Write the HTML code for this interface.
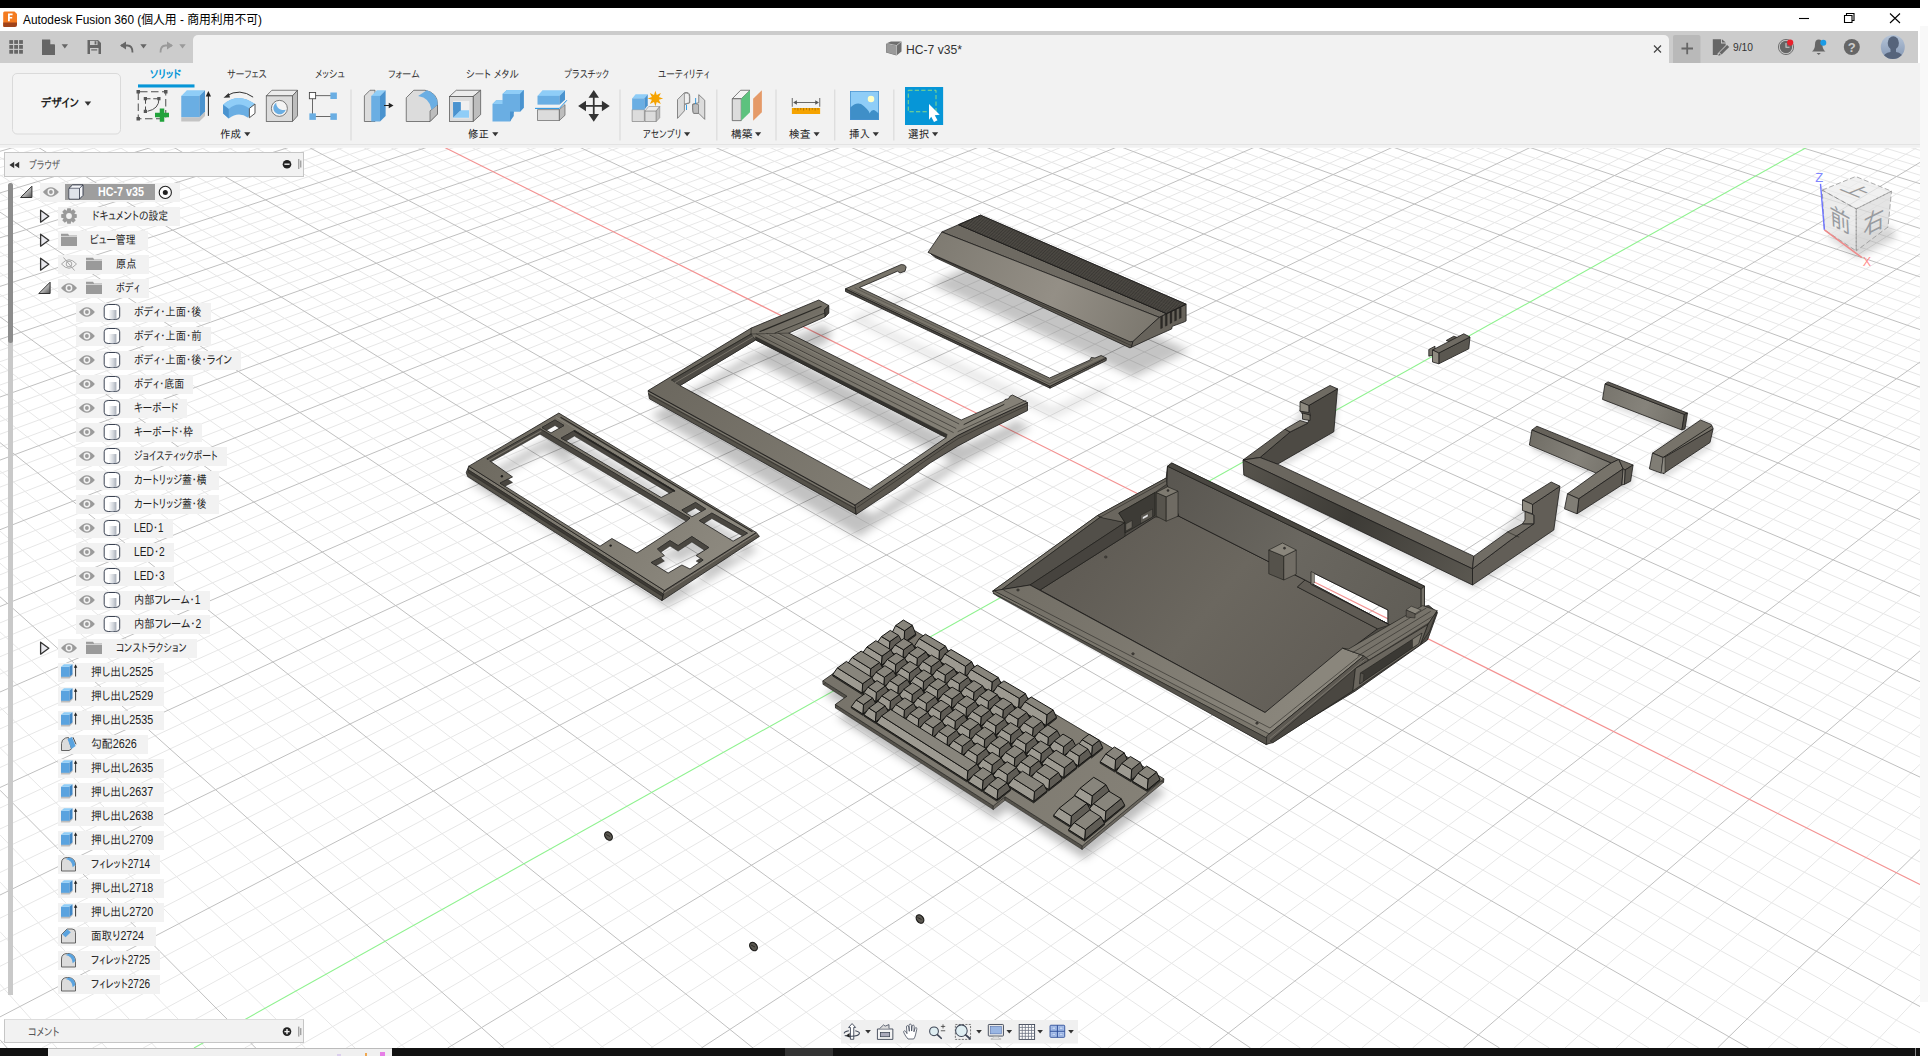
<!DOCTYPE html><html lang="ja"><head><meta charset="utf-8"><title>Autodesk Fusion 360</title><style>

html,body{margin:0;padding:0;}
body{width:1928px;height:1056px;overflow:hidden;background:#fff;position:relative;font-family:"Liberation Sans","IPAPGothic","IPAGothic","Noto Sans CJK JP",sans-serif;}
.abs{position:absolute;}
#topblack{left:0;top:0;width:1920px;height:8px;background:#000;}
#titlebar{left:0;top:8px;width:1920px;height:23px;background:#fff;}
#tabbar{left:0;top:31px;width:1918px;height:32px;background:#cccccc;}
#doctab{left:193px;top:35px;width:1476px;height:28px;background:#f2f2f2;border-radius:5px 5px 0 0;}
#toolbar{left:0;top:63px;width:1920px;height:81px;background:#f2f2f2;}
#tbline{left:0;top:144px;width:1920px;height:4px;background:linear-gradient(#e3e3e3 0,#e3e3e3 25%,#f1f1f1 25%,#f1f1f1 75%,#f9f9f9 100%);}
#botblack{left:0;top:1048px;width:1920px;height:8px;background:#111;}
#rstrip{left:1920px;top:26px;width:8px;height:976px;background:#f8f8f8;}
svg{position:absolute;left:0;top:0;}
text{font-family:"Liberation Sans","IPAPGothic","IPAGothic","Noto Sans CJK JP",sans-serif;}

.rb{position:absolute;height:19px;background:#f2f2f2;}

</style></head><body>
<svg width="1928" height="1056" viewBox="0 0 1928 1056">
<g fill="none" stroke-width="1">
<path stroke="#e7e7e7" d="M0.0 159.4 L42.5 147.0 M0.0 167.6 L70.0 147.0 M0.0 175.9 L97.6 147.0 M0.0 184.3 L125.1 147.0 M0.0 201.6 L180.1 147.0 M0.0 210.4 L207.6 147.0 M0.0 219.4 L235.2 147.0 M0.0 228.5 L262.7 147.0 M0.0 247.2 L317.7 147.0 M0.0 256.7 L345.3 147.0 M0.0 266.5 L372.8 147.0 M0.0 276.4 L400.3 147.0 M0.0 296.6 L455.4 147.0 M0.0 307.0 L483.0 147.0 M0.0 317.6 L510.5 147.0 M0.0 328.3 L538.1 147.0 M0.0 350.4 L593.2 147.0 M0.0 361.7 L620.7 147.0 M0.0 373.3 L648.3 147.0 M0.0 385.0 L675.8 147.0 M0.0 409.1 L731.0 147.0 M0.0 421.5 L758.5 147.0 M0.0 434.2 L786.1 147.0 M0.0 447.0 L813.6 147.0 M0.0 473.5 L868.8 147.0 M0.0 487.1 L896.4 147.0 M0.0 501.0 L923.9 147.0 M0.0 515.2 L951.5 147.0 M0.0 544.4 L1006.7 147.0 M0.0 559.5 L1034.3 147.0 M0.0 574.8 L1061.8 147.0 M0.0 590.5 L1089.4 147.0 M0.0 622.9 L1144.6 147.0 M0.0 639.6 L1172.2 147.0 M0.0 656.7 L1199.8 147.0 M0.0 674.1 L1227.4 147.0 M0.0 710.2 L1282.6 147.0 M0.0 728.9 L1310.2 147.0 M0.0 748.0 L1337.8 147.0 M0.0 767.5 L1365.4 147.0 M0.0 808.0 L1420.7 147.0 M0.0 829.0 L1448.3 147.0 M0.0 850.4 L1475.9 147.0 M0.0 872.5 L1503.5 147.0 M0.0 918.2 L1558.7 147.0 M0.0 941.9 L1586.4 147.0 M0.0 966.3 L1614.0 147.0 M0.0 991.3 L1641.6 147.0 M0.0 1043.3 L1696.9 147.0 M41.8 1048.0 L1724.5 147.0 M92.5 1048.0 L1752.2 147.0 M143.2 1048.0 L1779.8 147.0 M244.7 1048.0 L1835.1 147.0 M295.4 1048.0 L1862.7 147.0 M346.2 1048.0 L1890.4 147.0 M396.9 1048.0 L1918.0 147.0 M498.4 1048.0 L1920.0 179.6 M549.1 1048.0 L1920.0 197.3 M599.9 1048.0 L1920.0 215.5 M650.7 1048.0 L1920.0 234.4 M752.2 1048.0 L1920.0 274.0 M803.0 1048.0 L1920.0 294.9 M853.7 1048.0 L1920.0 316.4 M904.5 1048.0 L1920.0 338.8 M1006.1 1048.0 L1920.0 386.0 M1056.9 1048.0 L1920.0 411.0 M1107.7 1048.0 L1920.0 436.9 M1158.5 1048.0 L1920.0 463.8 M1260.1 1048.0 L1920.0 521.0 M1310.9 1048.0 L1920.0 551.4 M1361.7 1048.0 L1920.0 583.1 M1412.5 1048.0 L1920.0 616.2 M1514.1 1048.0 L1920.0 686.9 M1565.0 1048.0 L1920.0 724.7 M1615.8 1048.0 L1920.0 764.4 M1666.6 1048.0 L1920.0 806.0 M1768.3 1048.0 L1920.0 895.6 M1819.1 1048.0 L1920.0 944.0 M1870.0 1048.0 L1920.0 995.0 M0.0 984.2 L56.9 1048.0 M0.0 931.7 L106.6 1048.0 M0.0 882.0 L156.3 1048.0 M0.0 834.9 L206.0 1048.0 M0.0 747.7 L305.4 1048.0 M0.0 707.2 L355.1 1048.0 M0.0 668.7 L404.8 1048.0 M0.0 631.9 L454.6 1048.0 M0.0 563.2 L554.0 1048.0 M0.0 531.1 L603.8 1048.0 M0.0 500.4 L653.5 1048.0 M0.0 470.9 L703.2 1048.0 M0.0 415.4 L802.7 1048.0 M0.0 389.3 L852.5 1048.0 M0.0 364.2 L902.2 1048.0 M0.0 340.0 L952.0 1048.0 M0.0 294.3 L1051.5 1048.0 M0.0 272.7 L1101.3 1048.0 M0.0 251.8 L1151.1 1048.0 M0.0 231.6 L1200.9 1048.0 M0.0 193.2 L1300.4 1048.0 M0.0 175.0 L1350.2 1048.0 M0.0 157.3 L1400.0 1048.0 M10.8 147.0 L1449.8 1048.0 M64.9 147.0 L1549.4 1048.0 M91.9 147.0 L1599.2 1048.0 M119.0 147.0 L1649.0 1048.0 M146.0 147.0 L1698.8 1048.0 M200.2 147.0 L1798.5 1048.0 M227.2 147.0 L1848.3 1048.0 M254.3 147.0 L1898.1 1048.0 M281.3 147.0 L1920.0 1032.9 M335.5 147.0 L1920.0 980.8 M362.6 147.0 L1920.0 955.8 M389.6 147.0 L1920.0 931.5 M416.7 147.0 L1920.0 907.7 M470.9 147.0 L1920.0 862.0 M497.9 147.0 L1920.0 840.0 M525.0 147.0 L1920.0 818.5 M552.1 147.0 L1920.0 797.6 M606.3 147.0 L1920.0 757.1 M633.4 147.0 L1920.0 737.6 M660.5 147.0 L1920.0 718.6 M687.6 147.0 L1920.0 699.9 M741.7 147.0 L1920.0 663.9 M768.8 147.0 L1920.0 646.4 M796.0 147.0 L1920.0 629.4 M823.1 147.0 L1920.0 612.7 M877.3 147.0 L1920.0 580.4 M904.4 147.0 L1920.0 564.7 M931.5 147.0 L1920.0 549.4 M958.6 147.0 L1920.0 534.3 M1012.8 147.0 L1920.0 505.2 M1040.0 147.0 L1920.0 491.0 M1067.1 147.0 L1920.0 477.2 M1094.2 147.0 L1920.0 463.6 M1148.5 147.0 L1920.0 437.1 M1175.6 147.0 L1920.0 424.3 M1202.7 147.0 L1920.0 411.7 M1229.9 147.0 L1920.0 399.3 M1284.1 147.0 L1920.0 375.2 M1311.3 147.0 L1920.0 363.5 M1338.4 147.0 L1920.0 352.0 M1365.6 147.0 L1920.0 340.7 M1419.8 147.0 L1920.0 318.7 M1447.0 147.0 L1920.0 308.0 M1474.1 147.0 L1920.0 297.5 M1501.3 147.0 L1920.0 287.1 M1555.6 147.0 L1920.0 266.9 M1582.8 147.0 L1920.0 257.0 M1609.9 147.0 L1920.0 247.3 M1637.1 147.0 L1920.0 237.8 M1691.4 147.0 L1920.0 219.2 M1718.6 147.0 L1920.0 210.1 M1745.8 147.0 L1920.0 201.2 M1772.9 147.0 L1920.0 192.4 M1827.3 147.0 L1920.0 175.2 M1854.5 147.0 L1920.0 166.7 M1881.7 147.0 L1920.0 158.5 M1908.8 147.0 L1920.0 150.3"/>
<path stroke="#c0c0c0" d="M0.0 151.3 L15.0 147.0 M0.0 192.9 L152.6 147.0 M0.0 237.8 L290.2 147.0 M0.0 286.4 L427.9 147.0 M0.0 339.3 L565.6 147.0 M0.0 397.0 L703.4 147.0 M0.0 460.1 L841.2 147.0 M0.0 529.7 L979.1 147.0 M0.0 606.5 L1117.0 147.0 M0.0 692.0 L1255.0 147.0 M0.0 787.5 L1393.0 147.0 M0.0 895.0 L1531.1 147.0 M0.0 1016.9 L1669.3 147.0 M447.6 1048.0 L1920.0 162.4 M701.4 1048.0 L1920.0 253.9 M955.3 1048.0 L1920.0 362.0 M1209.3 1048.0 L1920.0 491.8 M1463.3 1048.0 L1920.0 650.8 M1717.5 1048.0 L1920.0 849.7 M0.0 1039.7 L7.2 1048.0 M0.0 790.2 L255.7 1048.0 M0.0 596.8 L504.3 1048.0 M0.0 442.6 L753.0 1048.0 M0.0 316.8 L1001.8 1048.0 M0.0 212.1 L1250.6 1048.0 M37.8 147.0 L1499.6 1048.0 M173.1 147.0 L1748.7 1048.0 M308.4 147.0 L1920.0 1006.5 M579.2 147.0 L1920.0 777.1 M714.6 147.0 L1920.0 681.7 M850.2 147.0 L1920.0 596.4 M985.7 147.0 L1920.0 519.6 M1121.3 147.0 L1920.0 450.2 M1257.0 147.0 L1920.0 387.2 M1392.7 147.0 L1920.0 329.6 M1528.5 147.0 L1920.0 276.9 M1664.3 147.0 L1920.0 228.4 M1800.1 147.0 L1920.0 183.7"/>
<path stroke="#8ff28f" stroke-width="1.1" d="M194.0 1048.0 L1807.4 147.0"/>
<path stroke="#f39292" stroke-width="1.15" d="M443.8 147.0 L1920.0 884.6"/>
</g>
<g id="models">
<g id="shadows">
<defs><filter id="b4" x="-20%" y="-20%" width="140%" height="140%"><feGaussianBlur stdDeviation="4"/></filter><filter id="b6" x="-20%" y="-20%" width="140%" height="140%"><feGaussianBlur stdDeviation="6"/></filter><filter id="b3" x="-20%" y="-20%" width="140%" height="140%"><feGaussianBlur stdDeviation="2.5"/></filter></defs>
<path d="M470.8 483.2 L560.8 430.1 L758.2 549.5 L666.4 607.6Z M496.0 479.0 L544.0 451.0 L690.0 538.0 L639.0 570.0 L614.0 556.0 L602.0 563.0 L505.0 502.0 L515.0 495.0Z M567.0 457.0 L578.0 451.5 L674.5 508.0 L664.0 514.5Z M703.0 539.0 L714.0 533.0 L744.0 551.0 L733.0 557.0Z M653.2 579.5 L666.4 572.6 L659.5 566.0 L672.0 557.6 L680.1 562.6 L693.9 553.5 L710.8 564.5 L698.2 572.6 L705.1 577.0 L692.0 586.0 L683.9 582.0 L670.1 590.1Z" fill="#000" fill-opacity="0.22" fill-rule="evenodd" filter="url(#b4)"/>
<path d="M651.1 415.6 L754.2 353.1 L821.8 325.0 L831.8 330.6 L828.0 341.9 L791.8 358.1 L964.2 445.0 L1006.8 426.2 L1015.5 420.0 L1030.5 427.5 L960.5 465.0 L859.0 537.0Z M679.0 408.0 L756.0 362.0 L952.0 461.0 L873.0 514.4Z" fill="#000" fill-opacity="0.24" fill-rule="evenodd" filter="url(#b4)"/>
<path d="M848.5 318.8 L904.2 294.5 L909.2 297.0 L903.0 303.0 L862.5 317.5 L1052.5 408.0 L1093.0 390.0 L1104.2 385.5 L1109.2 390.5 L1053.0 418.2Z " fill="#000" fill-opacity="0.1" fill-rule="evenodd" filter="url(#b4)"/>
<path d="M931.0 284.0 L1134.5 377.0 L1189.2 350.5 L985.7 258.0Z " fill="#000" fill-opacity="0.23" fill-rule="evenodd" filter="url(#b4)"/>
<path d="M824.9 693.9 L849.0 709.2 L837.4 717.5 L995.3 818.9 L1007.0 809.7 L1084.3 858.9 L1165.8 791.8 L905.2 636.9Z " fill="#000" fill-opacity="0.26" fill-rule="evenodd" filter="url(#b4)"/>
<path d="M1245.0 465.0 L1287.0 434.2 L1302.0 406.8 L1332.0 390.5 L1339.5 393.8 L1335.8 436.8 L1279.5 469.2 L1475.8 561.2 L1524.5 505.0 L1553.2 487.0 L1562.0 491.2 L1555.8 535.0 L1474.5 590.0 L1245.8 480.0Z " fill="#000" fill-opacity="0.12" fill-rule="evenodd" filter="url(#b3)"/>
<path d="M1533.9 435.0 L1538.9 431.2 L1620.8 464.4 L1635.1 470.0 L1632.6 486.2 L1623.9 490.0 L1579.0 518.8 L1566.5 513.8 L1598.2 478.1 L1531.4 450.0Z " fill="#000" fill-opacity="0.12" fill-rule="evenodd" filter="url(#b3)"/>
<path d="M1607.0 388.8 L1610.1 386.9 L1689.5 418.1 L1687.0 433.8 L1683.9 435.0 L1604.5 404.4Z " fill="#000" fill-opacity="0.12" fill-rule="evenodd" filter="url(#b3)"/>
<path d="M1654.5 458.1 L1702.6 425.0 L1713.2 429.4 L1712.0 447.5 L1665.1 478.8 L1651.4 473.8Z " fill="#000" fill-opacity="0.12" fill-rule="evenodd" filter="url(#b3)"/>
</g>
<g id="m_kbframe">
<path d="M468.8 466.2 L664.4 590.6 L661.9 600.6 L467.6 476.5 L466.3 472.5Z" fill="#55524a" stroke="#1d1c1a" stroke-width="0.8" stroke-linejoin="round" />
<path d="M468.8 466.2 L664.4 590.6 L663.5 594.1 L468.3 469.8Z" fill="#7d796f" stroke="#1d1c1a" stroke-width="0.5" stroke-linejoin="round" />
<path d="M468.3 469.8 L663.5 594.1 L662.9 596.8 L468.0 472.6Z" fill="#3d3a35" stroke="#1d1c1a" stroke-width="0.4" stroke-linejoin="round" />
<path d="M664.4 590.6 L756.2 532.5 L759.4 536.4 L661.9 600.6Z" fill="#5a564e" stroke="#1d1c1a" stroke-width="0.8" stroke-linejoin="round" />
<path d="M663.8 593.1 L757.2 533.7" fill="none" stroke="#8b877d" stroke-width="0.8" stroke-linecap="round" />
<defs><linearGradient id="gkf" gradientUnits="userSpaceOnUse" x1="480" y1="440" x2="700" y2="580"><stop offset="0" stop-color="#6d695f"/><stop offset="1" stop-color="#8c887e"/></linearGradient></defs>
<path d="M468.8 466.2 L558.8 413.1 L756.2 532.5 L664.4 590.6Z M486.9 458.8 L540.0 428.8 L690.0 518.1 L686.2 521.2 L636.9 553.1 L611.9 538.5 L600.0 546.2 L500.0 483.1 L512.5 476.9Z M561.2 438.1 L574.4 430.6 L674.4 490.6 L661.2 497.5Z M542.0 427.5 L555.0 420.0 L564.0 425.5 L551.0 433.0Z M681.9 510.0 L695.6 502.5 L705.6 509.0 L691.9 516.9Z M699.4 520.6 L711.9 513.1 L747.5 533.1 L733.1 541.2Z M651.2 562.5 L664.4 555.6 L657.5 549.0 L670.0 540.6 L678.1 545.6 L691.9 536.5 L708.8 547.5 L696.2 555.6 L703.1 560.0 L690.0 569.0 L681.9 565.0 L668.1 573.1Z" fill="url(#gkf)" fill-rule="evenodd" stroke="#1d1c1a" stroke-width="0.8" stroke-linejoin="round" />
<path d="M686.2 521.2 L690.0 518.1 L540.0 428.8 L486.9 458.8 L491.2 461.8 L540.0 434.2 L686.2 521.3Z" fill="#4a4741" stroke="#1d1c1a" stroke-width="0.5" stroke-linejoin="round" />
<path d="M500.0 483.1 L504.9 486.2 L512.5 482.4 L507.9 479.2Z" fill="#4a4741" stroke="#1d1c1a" stroke-width="0.5" stroke-linejoin="round" />
<path d="M674.4 490.6 L574.4 430.6 L561.2 438.1 L566.0 440.9 L574.4 436.1 L669.5 493.2Z" fill="#4a4741" stroke="#1d1c1a" stroke-width="0.5" stroke-linejoin="round" />
<path d="M564.0 425.5 L555.0 420.0 L542.0 427.5 L546.6 430.3 L555.0 425.5 L559.4 428.2Z" fill="#4a4741" stroke="#1d1c1a" stroke-width="0.5" stroke-linejoin="round" />
<path d="M705.6 509.0 L695.6 502.5 L681.9 510.0 L686.3 513.1 L695.6 508.0 L701.1 511.6Z" fill="#4a4741" stroke="#1d1c1a" stroke-width="0.5" stroke-linejoin="round" />
<path d="M747.5 533.1 L711.9 513.1 L699.4 520.6 L703.9 523.4 L711.9 518.6 L742.6 535.9Z" fill="#4a4741" stroke="#1d1c1a" stroke-width="0.5" stroke-linejoin="round" />
<path d="M651.2 562.5 L656.0 565.5 L664.4 561.1 L660.7 557.5Z" fill="#4a4741" stroke="#1d1c1a" stroke-width="0.5" stroke-linejoin="round" />
<path d="M708.8 547.5 L691.9 536.5 L678.1 545.6 L670.0 540.6 L657.5 549.0 L660.9 552.2 L670.0 546.1 L678.1 551.1 L691.9 542.0 L704.5 550.2Z" fill="#4a4741" stroke="#1d1c1a" stroke-width="0.5" stroke-linejoin="round" />
<path d="M703.1 560.0 L700.5 558.3 L696.2 561.1 L699.0 562.8Z" fill="#4a4741" stroke="#1d1c1a" stroke-width="0.5" stroke-linejoin="round" />
<path d="M488.5 460.5 L541.0 431.0" fill="none" stroke="#77736a" stroke-width="1.2" stroke-linecap="round" />
<path d="M561.0 417.5 L752.0 531.5" fill="none" stroke="#2e2c28" stroke-width="1.4" stroke-linecap="round" />
<path d="M556.0 417.0 L750.0 533.5" fill="none" stroke="#8a867c" stroke-width="0.8" stroke-linecap="round" />
<path d="M574.4 431.0 L674.4 491.0" fill="none" stroke="#262522" stroke-width="1.6" stroke-linecap="round" />
<circle cx="501.9" cy="476.2" r="1.2" fill="#1e1d1b"/>
<circle cx="610.6" cy="545.6" r="1.2" fill="#1e1d1b"/>
</g>
<g id="m_midframe">
<path d="M648.1 390.6 L855.0 505.0 L856.2 514.4 L649.4 398.8Z" fill="#55524a" stroke="#1d1c1a" stroke-width="0.8" stroke-linejoin="round" />
<path d="M648.7 394.3 L855.5 508.8" fill="none" stroke="#2f2d29" stroke-width="0.7" stroke-linecap="round" />
<path d="M648.4 392.4 L855.2 506.9" fill="none" stroke="#8a867c" stroke-width="0.8" stroke-linecap="round" />
<path d="M855.0 505.0 L900.0 474.5 L945.0 443.8 L957.5 435.6 L985.0 422.0 L1027.5 402.5 L1027.5 410.6 L985.0 431.5 L957.5 446.2 L930.0 463.0 L895.0 488.8 L856.2 514.4Z" fill="#5c5850" stroke="#1d1c1a" stroke-width="0.8" stroke-linejoin="round" />
<path d="M857.0 507.5 L901.0 477.5 L946.0 446.5 L958.5 438.4 L986.0 424.8 L1027.5 405.3" fill="none" stroke="#2f2d29" stroke-width="0.6" stroke-linecap="round" />
<path d="M828.8 305.6 L828.8 313.1 L825.0 316.9 L824.0 310.0Z" fill="#45423d" stroke="#1d1c1a" stroke-width="0.8" stroke-linejoin="round" />
<defs><linearGradient id="gmf" gradientUnits="userSpaceOnUse" x1="660" y1="330" x2="900" y2="520"><stop offset="0" stop-color="#69655c"/><stop offset="1" stop-color="#858177"/></linearGradient></defs>
<path d="M648.1 390.6 L751.2 328.1 L818.8 300.0 L828.8 305.6 L824.5 309.5 L825.0 316.9 L788.8 333.1 L961.2 420.0 L1003.8 401.2 L1005.0 399.5 L1008.5 398.8 L1010.0 396.2 L1012.5 395.0 L1027.5 402.5 L985.0 422.0 L957.5 435.6 L945.0 443.8 L900.0 474.5 L855.0 505.0Z M680.0 385.6 L755.6 340.0 L946.2 437.6 L870.0 489.4Z" fill="url(#gmf)" fill-rule="evenodd" stroke="#1d1c1a" stroke-width="0.8" stroke-linejoin="round" />
<path d="M671.5 380.0 L751.0 334.0 L755.6 340.0 L680.0 385.6Z" fill="#4d4a44" stroke="#1d1c1a" stroke-width="0.5" stroke-linejoin="round" />
<path d="M675.3 382.5 L753.1 336.7" fill="none" stroke="#7a766c" stroke-width="0.9" stroke-linecap="round" />
<path d="M755.6 336.8 L947.2 434.4 L946.2 437.6 L755.6 340.0Z" fill="#35332f" stroke="#1d1c1a" stroke-width="0.4" stroke-linejoin="round" />
<path d="M778.6 333.3 L958.8 423.9" fill="none" stroke="#2f2d29" stroke-width="0.7" stroke-linecap="round" />
<path d="M776.3 333.4 L958.2 424.8" fill="none" stroke="#8a867c" stroke-width="0.7" stroke-linecap="round" />
<path d="M766.9 333.6 L955.9 428.4" fill="none" stroke="#2f2d29" stroke-width="0.7" stroke-linecap="round" />
<path d="M764.6 333.7 L955.3 429.3" fill="none" stroke="#8a867c" stroke-width="0.6" stroke-linecap="round" />
<path d="M756.3 333.9 L953.3 432.5" fill="none" stroke="#2f2d29" stroke-width="0.6" stroke-linecap="round" />
<path d="M671.5 380.0 L751.0 334.0" fill="none" stroke="#24231f" stroke-width="0.6" stroke-linecap="round" />
<path d="M760.0 331.5 L821.0 306.5" fill="none" stroke="#2a2925" stroke-width="1.3" stroke-linecap="round" />
<path d="M766.0 335.5 L822.0 312.5" fill="none" stroke="#77736a" stroke-width="1.0" stroke-linecap="round" />
<path d="M775.0 333.0 L825.0 313.0" fill="none" stroke="#2a2925" stroke-width="0.8" stroke-linecap="round" />
<path d="M964.0 424.5 L1004.0 404.5" fill="none" stroke="#2a2925" stroke-width="1.0" stroke-linecap="round" />
<path d="M958.0 431.5 L1026.0 400.5" fill="none" stroke="#2a2925" stroke-width="0.6" stroke-linecap="round" />
<path d="M751.2 328.1 L751.0 334.0" fill="none" stroke="#24231f" stroke-width="0.6" stroke-linecap="round" />
<path d="M751.0 334.0 L788.8 333.1" fill="none" stroke="#24231f" stroke-width="0.5" stroke-linecap="round" />
</g>
<g id="m_thin">
<path d="M845.5 288.8 L1050.0 386.2 L1050.0 388.2 L845.5 291.5Z" fill="#4a4741" stroke="#1d1c1a" stroke-width="0.8" stroke-linejoin="round" />
<path d="M1050.0 386.2 L1106.2 358.0 L1106.2 360.5 L1050.0 388.2Z" fill="#5a564e" stroke="#1d1c1a" stroke-width="0.8" stroke-linejoin="round" />
<path d="M845.5 288.8 L901.2 264.5 L904.5 265.0 L906.2 267.0 L905.0 271.2 L900.0 273.0 L897.5 271.2 L859.5 287.5 L1049.5 378.0 L1090.0 360.0 L1091.2 357.5 L1095.0 358.0 L1101.2 355.5 L1106.2 358.0 L1050.0 386.2Z" fill="#78746a" stroke="#1d1c1a" stroke-width="0.8" stroke-linejoin="round" />
<path d="M850.0 289.5 L1049.5 383.8 L1103.8 358.5" fill="none" stroke="#3a3833" stroke-width="0.6" stroke-linecap="round" />
<path d="M855.0 288.0 L1049.5 380.5 L1092.5 360.0" fill="none" stroke="#4f4c46" stroke-width="0.6" stroke-linecap="round" />
</g>
<g id="m_lid">
<path d="M930.9 253.9 L935.3 257.5 L1130.0 347.9 L1131.5 347.2 L1132.9 342.1Z" fill="#5c5850" stroke="#1d1c1a" stroke-width="0.8" stroke-linejoin="round" />
<path d="M935.3 256.3 L1130.7 345.3" fill="none" stroke="#2c2a27" stroke-width="0.6" stroke-linecap="round" />
<path d="M1159.2 317.3 L1186.1 304.2 L1186.1 320.9 L1184.0 322.0 L1172.3 326.3 L1171.6 329.0 L1150.4 338.4 L1131.5 347.2 L1132.9 341.4Z" fill="#67635b" stroke="#1d1c1a" stroke-width="0.8" stroke-linejoin="round" />
<path d="M1160.6 316.9 L1162.5 316.0 L1162.5 327.9 L1160.6 328.8Z" fill="#2d2b27" stroke="#1d1c1a" stroke-width="0.3" stroke-linejoin="round" />
<path d="M1165.3 314.6 L1167.2 313.7 L1167.2 325.4 L1165.3 326.2Z" fill="#2d2b27" stroke="#1d1c1a" stroke-width="0.3" stroke-linejoin="round" />
<path d="M1170.0 312.3 L1171.9 311.5 L1171.9 322.8 L1170.0 323.7Z" fill="#2d2b27" stroke="#1d1c1a" stroke-width="0.3" stroke-linejoin="round" />
<path d="M1174.6 310.1 L1176.5 309.2 L1176.5 320.3 L1174.6 321.2Z" fill="#2d2b27" stroke="#1d1c1a" stroke-width="0.3" stroke-linejoin="round" />
<path d="M1179.3 307.8 L1181.2 306.9 L1181.2 317.8 L1179.3 318.7Z" fill="#2d2b27" stroke="#1d1c1a" stroke-width="0.3" stroke-linejoin="round" />
<path d="M941.9 232.0 L958.6 224.7 L1166.5 313.6 L1159.2 317.3Z" fill="#6e6a62" stroke="#1d1c1a" stroke-width="0.8" stroke-linejoin="round" />
<path d="M958.6 224.7 L980.5 215.2 L1186.1 304.2 L1166.5 313.6Z" fill="#5f5b54" stroke="#1d1c1a" stroke-width="0.8" stroke-linejoin="round" />
<path d="M960.3 224.0 L1168.0 312.9" fill="none" stroke="#2b2926" stroke-width="0.7" stroke-linecap="round" />
<path d="M962.0 223.2 L1169.5 312.2" fill="none" stroke="#2b2926" stroke-width="0.7" stroke-linecap="round" />
<path d="M963.7 222.5 L1171.0 311.5" fill="none" stroke="#2b2926" stroke-width="0.7" stroke-linecap="round" />
<path d="M965.4 221.8 L1172.5 310.7" fill="none" stroke="#2b2926" stroke-width="0.7" stroke-linecap="round" />
<path d="M967.1 221.0 L1174.0 310.0" fill="none" stroke="#2b2926" stroke-width="0.7" stroke-linecap="round" />
<path d="M968.7 220.3 L1175.5 309.3" fill="none" stroke="#2b2926" stroke-width="0.7" stroke-linecap="round" />
<path d="M970.4 219.6 L1177.1 308.5" fill="none" stroke="#2b2926" stroke-width="0.7" stroke-linecap="round" />
<path d="M972.1 218.9 L1178.6 307.8" fill="none" stroke="#2b2926" stroke-width="0.7" stroke-linecap="round" />
<path d="M973.8 218.1 L1180.1 307.1" fill="none" stroke="#2b2926" stroke-width="0.7" stroke-linecap="round" />
<path d="M975.5 217.4 L1181.6 306.4" fill="none" stroke="#2b2926" stroke-width="0.7" stroke-linecap="round" />
<path d="M977.2 216.7 L1183.1 305.6" fill="none" stroke="#2b2926" stroke-width="0.7" stroke-linecap="round" />
<path d="M978.8 215.9 L1184.6 304.9" fill="none" stroke="#2b2926" stroke-width="0.7" stroke-linecap="round" />
<path d="M958.6 224.7 L980.5 215.2 L1186.1 304.2 L1166.5 313.6Z" fill="none" stroke="#1d1c1a" stroke-width="0.8" stroke-linejoin="round" />
<defs><linearGradient id="glid" gradientUnits="userSpaceOnUse" x1="935" y1="245" x2="1150" y2="340"><stop offset="0" stop-color="#7f7b72"/><stop offset="0.55" stop-color="#948f86"/><stop offset="1" stop-color="#7b776e"/></linearGradient></defs>
<path d="M928.0 252.4 L941.9 232.0 L1159.2 317.3 L1132.9 341.4 L1130.0 341.8Z" fill="url(#glid)" stroke="#1d1c1a" stroke-width="0.8" stroke-linejoin="round" />
</g>
<g id="m_case">
<path d="M992.5 591.2 L1097.5 515.5 L1166.2 478.0 L1167.5 466.2 L1171.8 463.0 L1424.5 586.2 L1424.5 606.2 L1428.8 605.5 L1437.5 612.5 L1427.5 640.0 L1355.0 691.2 L1275.0 740.0 L1266.2 744.5Z M1311.2 571.8 L1388.0 610.0 L1388.0 623.8 L1311.2 584.5Z" fill="#4e4b45" fill-rule="evenodd" stroke="#1d1c1a" stroke-width="0.8" stroke-linejoin="round" />
<defs><linearGradient id="gfloor" gradientUnits="userSpaceOnUse" x1="1100" y1="540" x2="1300" y2="700"><stop offset="0" stop-color="#605c55"/><stop offset="0.5" stop-color="#6b675f"/><stop offset="1" stop-color="#625e57"/></linearGradient><linearGradient id="gwall" gradientUnits="userSpaceOnUse" x1="1180" y1="470" x2="1420" y2="620"><stop offset="0" stop-color="#5a5751"/><stop offset="0.5" stop-color="#6a6760"/><stop offset="1" stop-color="#605d56"/></linearGradient></defs>
<path d="M1040.0 590.0 L1125.0 536.2 L1155.0 517.0 L1178.8 516.2 L1305.0 580.0 L1297.5 587.0 L1377.5 628.8 L1265.0 712.5Z" fill="url(#gfloor)" stroke="#1d1c1a" stroke-width="0.8" stroke-linejoin="round" />
<path d="M1297.5 587.0 L1305.0 580.0 L1390.0 625.0 L1377.5 628.8Z" fill="#5f5b54" stroke="#1d1c1a" stroke-width="0.6" stroke-linejoin="round" />
<path d="M1167.5 466.2 L1421.2 589.2 L1421.2 610.0 L1405.0 617.0 L1390.0 625.0 L1305.0 580.0 L1178.8 516.2 L1166.8 484.2Z M1311.2 571.8 L1388.0 610.0 L1388.0 623.8 L1311.2 584.5Z" fill="url(#gwall)" fill-rule="evenodd" stroke="#1d1c1a" stroke-width="0.8" stroke-linejoin="round" />
<path d="M1167.5 466.2 L1171.8 463.0 L1424.5 586.2 L1421.2 589.2Z" fill="#4a4741" stroke="#1d1c1a" stroke-width="0.6" stroke-linejoin="round" />
<path d="M1421.2 589.2 L1424.5 586.2 L1424.5 607.5 L1421.2 610.0Z" fill="#77736a" stroke="#1d1c1a" stroke-width="0.6" stroke-linejoin="round" />
<path d="M1311.2 571.8 L1314.5 573.0 L1314.5 583.0 L1311.2 584.5Z" fill="#8a867c" stroke="#1d1c1a" stroke-width="0.4" stroke-linejoin="round" />
<path d="M992.5 591.2 L1097.5 515.5 L1100.5 517.0 L1001.2 590.0Z" fill="#77736a" stroke="#1d1c1a" stroke-width="0.6" stroke-linejoin="round" />
<path d="M1001.2 590.0 L1100.5 517.0 L1125.0 522.5 L1030.0 585.0Z" fill="#524f49" stroke="#1d1c1a" stroke-width="0.6" stroke-linejoin="round" />
<path d="M1030.0 585.0 L1125.0 522.5 L1125.0 536.2 L1040.0 590.0Z" fill="#46433e" stroke="#1d1c1a" stroke-width="0.6" stroke-linejoin="round" />
<path d="M1097.5 515.5 L1166.2 478.0 L1166.8 484.2 L1155.0 492.5 L1118.8 513.0 L1125.0 522.5 L1103.0 518.0Z" fill="#6a665e" stroke="#1d1c1a" stroke-width="0.6" stroke-linejoin="round" />
<path d="M1099.5 517.5 L1165.5 481.2" fill="none" stroke="#2a2925" stroke-width="0.6" stroke-linecap="round" />
<path d="M1118.8 513.0 L1155.0 492.5 L1155.0 515.5 L1125.0 533.0 L1125.0 522.5Z" fill="#3d3b36" stroke="#1d1c1a" stroke-width="0.6" stroke-linejoin="round" />
<path d="M1140.5 515.5 L1152.5 509.0 L1152.5 517.0 L1140.5 523.5Z" fill="#5a5750" stroke="#1d1c1a" stroke-width="0.4" stroke-linejoin="round" />
<path d="M1142.5 517.0 L1148.0 514.0 L1148.0 516.5 L1142.5 519.5Z" fill="#e8e8e8" stroke="#1d1c1a" stroke-width="0.3" stroke-linejoin="round" />
<path d="M1125.8 524.0 L1132.0 520.5 L1132.0 527.5 L1125.8 531.0Z" fill="#6a665e" stroke="#1d1c1a" stroke-width="0.4" stroke-linejoin="round" />
<path d="M1156.2 492.5 L1166.2 496.8 L1166.2 521.2 L1156.2 516.2Z" fill="#57544d" stroke="#1d1c1a" stroke-width="0.6" stroke-linejoin="round" />
<path d="M1166.2 496.8 L1178.0 491.2 L1178.0 516.2 L1166.2 521.2Z" fill="#6f6b63" stroke="#1d1c1a" stroke-width="0.6" stroke-linejoin="round" />
<path d="M1156.2 492.5 L1167.5 486.8 L1178.0 491.2 L1166.2 496.8Z" fill="#7e7a70" stroke="#1d1c1a" stroke-width="0.6" stroke-linejoin="round" />
<circle cx="1168.0" cy="490.5" r="1.1" fill="#3a3834" stroke="#1e1d1b" stroke-width="0.4"/>
<path d="M1268.8 550.0 L1283.8 556.2 L1283.8 580.0 L1268.8 573.8Z" fill="#55524b" stroke="#1d1c1a" stroke-width="0.6" stroke-linejoin="round" />
<path d="M1283.8 556.2 L1296.2 550.0 L1296.2 574.2 L1283.8 580.0Z" fill="#716d65" stroke="#1d1c1a" stroke-width="0.6" stroke-linejoin="round" />
<path d="M1268.8 550.0 L1282.5 543.0 L1296.2 550.0 L1283.8 556.2Z" fill="#8a867c" stroke="#1d1c1a" stroke-width="0.6" stroke-linejoin="round" />
<circle cx="1284.5" cy="548.2" r="1.1" fill="#3a3834" stroke="#1e1d1b" stroke-width="0.4"/>
<defs><linearGradient id="grim" gradientUnits="userSpaceOnUse" x1="1000" y1="590" x2="1280" y2="740"><stop offset="0" stop-color="#726e65"/><stop offset="1" stop-color="#8a867c"/></linearGradient></defs>
<path d="M993.8 590.8 L1030.0 585.0 L1265.0 712.5 L1342.6 648.2 L1363.9 655.8 L1266.8 735.9Z" fill="url(#grim)" stroke="#1d1c1a" stroke-width="0.8" stroke-linejoin="round" />
<path d="M1003.8 590.2 L1270.0 728.0 L1360.5 655.3" fill="none" stroke="#2a2925" stroke-width="0.6" stroke-linecap="round" />
<path d="M993.8 590.8 L1271.2 735.0 L1269.5 739.5 L993.0 593.0Z" fill="#7a766c" stroke="#1d1c1a" stroke-width="0.5" stroke-linejoin="round" />
<path d="M993.0 593.0 L1269.5 739.5 L1266.2 744.5 L997.5 596.2Z" fill="#55524b" stroke="#1d1c1a" stroke-width="0.5" stroke-linejoin="round" />
<path d="M1363.9 655.8 L1369.1 660.1 L1355.4 668.6 L1352.9 690.8 L1272.8 742.7 L1266.3 744.4 L1266.8 735.9Z" fill="#5d5952" stroke="#1d1c1a" stroke-width="0.6" stroke-linejoin="round" />
<path d="M1369.1 660.1 L1273.6 740.2" fill="none" stroke="#2a2925" stroke-width="0.6" stroke-linecap="round" />
<path d="M1366.5 658.0 L1270.2 738.1" fill="none" stroke="#8a867c" stroke-width="0.6" stroke-linecap="round" />
<path d="M1355.4 668.6 L1352.9 690.8 L1272.8 742.7 L1270.2 741.0Z" fill="#4a4741" stroke="#1d1c1a" stroke-width="0.5" stroke-linejoin="round" />
<path d="M1342.6 648.2 L1348.6 649.0 L1422.7 605.6 L1437.2 610.7 L1427.8 624.6 L1355.4 668.6 L1369.1 660.1 L1363.9 655.8Z" fill="#77736a" stroke="#1d1c1a" stroke-width="0.6" stroke-linejoin="round" />
<path d="M1352.9 652.4 L1426.1 608.1" fill="none" stroke="#2a2925" stroke-width="0.6" stroke-linecap="round" />
<path d="M1358.0 655.8 L1430.4 611.5" fill="none" stroke="#2a2925" stroke-width="0.6" stroke-linecap="round" />
<path d="M1362.2 660.1 L1432.1 616.6" fill="none" stroke="#2a2925" stroke-width="0.6" stroke-linecap="round" />
<path d="M1366.5 661.8 L1429.6 622.6" fill="none" stroke="#45423d" stroke-width="1.2" stroke-linecap="round" />
<path d="M1427.8 624.6 L1437.2 610.7 L1429.6 631.1 L1420.2 644.8Z" fill="#55524b" stroke="#1d1c1a" stroke-width="0.6" stroke-linejoin="round" />
<path d="M1355.4 668.6 L1427.8 624.6 L1420.2 644.8 L1352.9 690.8Z" fill="#6a665e" stroke="#1d1c1a" stroke-width="0.6" stroke-linejoin="round" />
<path d="M1360.5 672.9 L1421.9 633.2 L1418.5 643.9 L1359.7 683.9Z" fill="#3b3934" stroke="#1d1c1a" stroke-width="0.6" stroke-linejoin="round" />
<path d="M1412.5 639.3 L1421.9 633.2 L1418.5 643.9 L1412.5 647.8Z" fill="#7d796f" stroke="#1d1c1a" stroke-width="0.4" stroke-linejoin="round" />
<path d="M1360.5 672.9 L1363.9 674.1 L1363.3 681.6 L1359.7 683.9Z" fill="#55524b" stroke="#1d1c1a" stroke-width="0.4" stroke-linejoin="round" />
<path d="M1406.2 610.0 L1411.2 606.2 L1421.2 610.0 L1415.0 613.8Z" fill="#8a867c" stroke="#1d1c1a" stroke-width="0.5" stroke-linejoin="round" />
<path d="M1406.2 610.0 L1415.0 613.8 L1415.0 618.0 L1406.2 617.0Z" fill="#5d5952" stroke="#1d1c1a" stroke-width="0.5" stroke-linejoin="round" />
<ellipse cx="1018.0" cy="590.0" rx="1.3" ry="1.1" fill="#4a4741" stroke="#1e1d1b" stroke-width="0.5"/>
<ellipse cx="1133.0" cy="653.8" rx="1.3" ry="1.1" fill="#4a4741" stroke="#1e1d1b" stroke-width="0.5"/>
<ellipse cx="1257.0" cy="723.2" rx="1.3" ry="1.1" fill="#4a4741" stroke="#1e1d1b" stroke-width="0.5"/>
<ellipse cx="1105.8" cy="557.0" rx="1.3" ry="1.1" fill="#4a4741" stroke="#1e1d1b" stroke-width="0.5"/>
</g>
<g id="m_keyboard">
<path d="M822.9 680.9 L847.0 696.2 L847.1 699.7 L823.1 684.4Z" fill="#55524b" stroke="#1d1c1a" stroke-width="0.5" stroke-linejoin="round" />
<path d="M847.0 696.2 L835.4 704.5 L835.5 708.0 L847.1 699.7Z" fill="#6a665e" stroke="#1d1c1a" stroke-width="0.5" stroke-linejoin="round" />
<path d="M835.4 704.5 L993.3 805.9 L993.3 809.6 L835.5 708.0Z" fill="#55524b" stroke="#1d1c1a" stroke-width="0.5" stroke-linejoin="round" />
<path d="M993.3 805.9 L1005.0 796.7 L1005.0 800.3 L993.3 809.6Z" fill="#6a665e" stroke="#1d1c1a" stroke-width="0.5" stroke-linejoin="round" />
<path d="M1005.0 796.7 L1082.3 845.9 L1082.1 849.5 L1005.0 800.3Z" fill="#55524b" stroke="#1d1c1a" stroke-width="0.5" stroke-linejoin="round" />
<path d="M1082.3 845.9 L1163.8 778.8 L1163.5 782.4 L1082.1 849.5Z" fill="#6a665e" stroke="#1d1c1a" stroke-width="0.5" stroke-linejoin="round" />
<path d="M1163.8 778.8 L903.2 623.9 L903.3 627.3 L1163.5 782.4Z" fill="#55524b" stroke="#1d1c1a" stroke-width="0.5" stroke-linejoin="round" />
<path d="M903.2 623.9 L822.9 680.9 L823.1 684.4 L903.3 627.3Z" fill="#6a665e" stroke="#1d1c1a" stroke-width="0.5" stroke-linejoin="round" />
<defs><linearGradient id="gkb" gradientUnits="userSpaceOnUse" x1="830" y1="680" x2="1160" y2="790"><stop offset="0" stop-color="#77736a"/><stop offset="1" stop-color="#858177"/></linearGradient></defs>
<path d="M822.9 680.9 L847.0 696.2 L835.4 704.5 L993.3 805.9 L1005.0 796.7 L1082.3 845.9 L1163.8 778.8 L903.2 623.9Z" fill="url(#gkb)" stroke="#1d1c1a" stroke-width="0.6" stroke-linejoin="round" />
<path d="M914.4 647.6 L938.8 662.3 L949.0 654.8 L949.0 653.4 L938.8 660.8 L914.4 646.2Z" fill="#3d3b36" stroke="#141412" stroke-width="0.7" stroke-linejoin="round" />
<path d="M938.8 660.8 L949.0 653.4 L945.6 646.2 L939.4 650.7Z" fill="#5f5c55" stroke="#141412" stroke-width="1.0" stroke-linejoin="round" />
<path d="M914.4 646.2 L938.8 660.8 L939.4 650.7 L919.2 638.6Z" fill="#9d9a91" stroke="#141412" stroke-width="1.0" stroke-linejoin="round" />
<path d="M919.2 638.6 L939.4 650.7 L945.6 646.2 L925.4 634.2Z" fill="#88857c" stroke="#141412" stroke-width="1.0" stroke-linejoin="round" />
<path d="M940.0 663.0 L964.8 677.9 L975.1 670.3 L975.1 668.9 L964.8 676.5 L940.0 661.6Z" fill="#3d3b36" stroke="#141412" stroke-width="0.7" stroke-linejoin="round" />
<path d="M964.8 676.5 L975.1 668.9 L971.7 661.7 L965.5 666.3Z" fill="#5f5c55" stroke="#141412" stroke-width="1.0" stroke-linejoin="round" />
<path d="M940.0 661.6 L964.8 676.5 L965.5 666.3 L944.9 653.9Z" fill="#9d9a91" stroke="#141412" stroke-width="1.0" stroke-linejoin="round" />
<path d="M944.9 653.9 L965.5 666.3 L971.7 661.7 L951.0 649.5Z" fill="#88857c" stroke="#141412" stroke-width="1.0" stroke-linejoin="round" />
<path d="M966.0 678.6 L991.4 693.9 L1001.7 686.1 L1001.7 684.7 L991.4 692.4 L966.0 677.2Z" fill="#3d3b36" stroke="#141412" stroke-width="0.7" stroke-linejoin="round" />
<path d="M991.4 692.4 L1001.7 684.7 L998.3 677.5 L992.1 682.1Z" fill="#5f5c55" stroke="#141412" stroke-width="1.0" stroke-linejoin="round" />
<path d="M966.0 677.2 L991.4 692.4 L992.1 682.1 L971.0 669.6Z" fill="#9d9a91" stroke="#141412" stroke-width="1.0" stroke-linejoin="round" />
<path d="M971.0 669.6 L992.1 682.1 L998.3 677.5 L977.2 665.0Z" fill="#88857c" stroke="#141412" stroke-width="1.0" stroke-linejoin="round" />
<path d="M992.6 694.6 L1018.4 710.2 L1028.8 702.3 L1028.8 700.8 L1018.5 708.7 L992.6 693.2Z" fill="#3d3b36" stroke="#141412" stroke-width="0.7" stroke-linejoin="round" />
<path d="M1018.5 708.7 L1028.8 700.8 L1025.4 693.6 L1019.2 698.3Z" fill="#5f5c55" stroke="#141412" stroke-width="1.0" stroke-linejoin="round" />
<path d="M992.6 693.2 L1018.5 708.7 L1019.2 698.3 L997.7 685.5Z" fill="#9d9a91" stroke="#141412" stroke-width="1.0" stroke-linejoin="round" />
<path d="M997.7 685.5 L1019.2 698.3 L1025.4 693.6 L1003.9 680.9Z" fill="#88857c" stroke="#141412" stroke-width="1.0" stroke-linejoin="round" />
<path d="M1019.7 710.9 L1046.1 726.8 L1056.4 718.8 L1056.5 717.3 L1046.1 725.3 L1019.7 709.5Z" fill="#3d3b36" stroke="#141412" stroke-width="0.7" stroke-linejoin="round" />
<path d="M1046.1 725.3 L1056.5 717.3 L1053.1 710.0 L1046.9 714.8Z" fill="#5f5c55" stroke="#141412" stroke-width="1.0" stroke-linejoin="round" />
<path d="M1019.7 709.5 L1046.1 725.3 L1046.9 714.8 L1025.0 701.7Z" fill="#9d9a91" stroke="#141412" stroke-width="1.0" stroke-linejoin="round" />
<path d="M1025.0 701.7 L1046.9 714.8 L1053.1 710.0 L1031.2 697.0Z" fill="#88857c" stroke="#141412" stroke-width="1.0" stroke-linejoin="round" />
<path d="M891.1 636.2 L904.0 644.0 L915.8 635.5 L915.8 634.1 L904.0 642.6 L891.0 634.8Z" fill="#3d3b36" stroke="#141412" stroke-width="0.7" stroke-linejoin="round" />
<path d="M904.0 642.6 L915.8 634.1 L912.3 625.3 L904.6 630.8Z" fill="#5f5c55" stroke="#141412" stroke-width="1.0" stroke-linejoin="round" />
<path d="M891.0 634.8 L904.0 642.6 L904.6 630.8 L895.7 625.5Z" fill="#9d9a91" stroke="#141412" stroke-width="1.0" stroke-linejoin="round" />
<path d="M895.7 625.5 L904.6 630.8 L912.3 625.3 L903.4 620.0Z" fill="#88857c" stroke="#141412" stroke-width="1.0" stroke-linejoin="round" />
<path d="M1076.6 749.0 L1091.5 758.0 L1102.6 749.1 L1102.7 747.6 L1091.5 756.5 L1076.6 747.6Z" fill="#3d3b36" stroke="#141412" stroke-width="0.7" stroke-linejoin="round" />
<path d="M1091.5 756.5 L1102.7 747.6 L1099.3 740.3 L1092.3 745.8Z" fill="#5f5c55" stroke="#141412" stroke-width="1.0" stroke-linejoin="round" />
<path d="M1076.6 747.6 L1091.5 756.5 L1092.3 745.8 L1082.1 739.7Z" fill="#9d9a91" stroke="#141412" stroke-width="1.0" stroke-linejoin="round" />
<path d="M1082.1 739.7 L1092.3 745.8 L1099.3 740.3 L1089.1 734.2Z" fill="#88857c" stroke="#141412" stroke-width="1.0" stroke-linejoin="round" />
<path d="M1100.2 763.2 L1114.7 772.0 L1127.5 761.7 L1127.6 760.2 L1114.8 770.5 L1100.2 761.8Z" fill="#3d3b36" stroke="#141412" stroke-width="0.7" stroke-linejoin="round" />
<path d="M1114.8 770.5 L1127.6 760.2 L1124.2 752.8 L1115.6 759.7Z" fill="#5f5c55" stroke="#141412" stroke-width="1.0" stroke-linejoin="round" />
<path d="M1100.2 761.8 L1114.8 770.5 L1115.6 759.7 L1105.8 753.9Z" fill="#9d9a91" stroke="#141412" stroke-width="1.0" stroke-linejoin="round" />
<path d="M1105.8 753.9 L1115.6 759.7 L1124.2 752.8 L1114.4 747.0Z" fill="#88857c" stroke="#141412" stroke-width="1.0" stroke-linejoin="round" />
<path d="M1116.1 772.8 L1130.8 781.7 L1143.6 771.3 L1143.7 769.8 L1130.9 780.2 L1116.2 771.4Z" fill="#3d3b36" stroke="#141412" stroke-width="0.7" stroke-linejoin="round" />
<path d="M1130.9 780.2 L1143.7 769.8 L1140.3 762.4 L1131.7 769.4Z" fill="#5f5c55" stroke="#141412" stroke-width="1.0" stroke-linejoin="round" />
<path d="M1116.2 771.4 L1130.9 780.2 L1131.7 769.4 L1121.8 763.4Z" fill="#9d9a91" stroke="#141412" stroke-width="1.0" stroke-linejoin="round" />
<path d="M1121.8 763.4 L1131.7 769.4 L1140.3 762.4 L1130.4 756.5Z" fill="#88857c" stroke="#141412" stroke-width="1.0" stroke-linejoin="round" />
<path d="M1132.2 782.5 L1147.1 791.5 L1159.9 781.0 L1160.0 779.5 L1147.2 790.0 L1132.3 781.1Z" fill="#3d3b36" stroke="#141412" stroke-width="0.7" stroke-linejoin="round" />
<path d="M1147.2 790.0 L1160.0 779.5 L1156.6 772.1 L1148.0 779.1Z" fill="#5f5c55" stroke="#141412" stroke-width="1.0" stroke-linejoin="round" />
<path d="M1132.3 781.1 L1147.2 790.0 L1148.0 779.1 L1138.0 773.1Z" fill="#9d9a91" stroke="#141412" stroke-width="1.0" stroke-linejoin="round" />
<path d="M1138.0 773.1 L1148.0 779.1 L1156.6 772.1 L1146.6 766.1Z" fill="#88857c" stroke="#141412" stroke-width="1.0" stroke-linejoin="round" />
<path d="M876.9 644.6 L889.2 652.1 L902.1 642.9 L902.0 641.5 L889.2 650.7 L876.8 643.2Z" fill="#3d3b36" stroke="#141412" stroke-width="0.7" stroke-linejoin="round" />
<path d="M889.2 650.7 L902.0 641.5 L898.6 635.4 L889.8 641.6Z" fill="#5f5c55" stroke="#141412" stroke-width="1.0" stroke-linejoin="round" />
<path d="M876.8 643.2 L889.2 650.7 L889.8 641.6 L881.5 636.6Z" fill="#9d9a91" stroke="#141412" stroke-width="1.0" stroke-linejoin="round" />
<path d="M881.5 636.6 L889.8 641.6 L898.6 635.4 L890.3 630.4Z" fill="#88857c" stroke="#141412" stroke-width="1.0" stroke-linejoin="round" />
<path d="M890.4 652.8 L902.8 660.4 L915.7 651.1 L915.7 649.7 L902.8 659.0 L890.3 651.4Z" fill="#3d3b36" stroke="#141412" stroke-width="0.7" stroke-linejoin="round" />
<path d="M902.8 659.0 L915.7 649.7 L912.2 643.6 L903.5 649.8Z" fill="#5f5c55" stroke="#141412" stroke-width="1.0" stroke-linejoin="round" />
<path d="M890.3 651.4 L902.8 659.0 L903.5 649.8 L895.1 644.8Z" fill="#9d9a91" stroke="#141412" stroke-width="1.0" stroke-linejoin="round" />
<path d="M895.1 644.8 L903.5 649.8 L912.2 643.6 L903.8 638.5Z" fill="#88857c" stroke="#141412" stroke-width="1.0" stroke-linejoin="round" />
<path d="M904.0 661.1 L916.6 668.8 L929.5 659.4 L929.5 658.0 L916.6 667.4 L904.0 659.7Z" fill="#3d3b36" stroke="#141412" stroke-width="0.7" stroke-linejoin="round" />
<path d="M916.6 667.4 L929.5 658.0 L926.0 651.8 L917.3 658.2Z" fill="#5f5c55" stroke="#141412" stroke-width="1.0" stroke-linejoin="round" />
<path d="M904.0 659.7 L916.6 667.4 L917.3 658.2 L908.8 653.1Z" fill="#9d9a91" stroke="#141412" stroke-width="1.0" stroke-linejoin="round" />
<path d="M908.8 653.1 L917.3 658.2 L926.0 651.8 L917.6 646.8Z" fill="#88857c" stroke="#141412" stroke-width="1.0" stroke-linejoin="round" />
<path d="M917.8 669.5 L930.5 677.3 L943.4 667.8 L943.4 666.4 L930.5 675.9 L917.8 668.1Z" fill="#3d3b36" stroke="#141412" stroke-width="0.7" stroke-linejoin="round" />
<path d="M930.5 675.9 L943.4 666.4 L940.0 660.2 L931.2 666.6Z" fill="#5f5c55" stroke="#141412" stroke-width="1.0" stroke-linejoin="round" />
<path d="M917.8 668.1 L930.5 675.9 L931.2 666.6 L922.7 661.4Z" fill="#9d9a91" stroke="#141412" stroke-width="1.0" stroke-linejoin="round" />
<path d="M922.7 661.4 L931.2 666.6 L940.0 660.2 L931.4 655.1Z" fill="#88857c" stroke="#141412" stroke-width="1.0" stroke-linejoin="round" />
<path d="M931.7 678.0 L944.6 685.8 L957.5 676.3 L957.5 674.9 L944.6 684.4 L931.7 676.6Z" fill="#3d3b36" stroke="#141412" stroke-width="0.7" stroke-linejoin="round" />
<path d="M944.6 684.4 L957.5 674.9 L954.1 668.7 L945.3 675.1Z" fill="#5f5c55" stroke="#141412" stroke-width="1.0" stroke-linejoin="round" />
<path d="M931.7 676.6 L944.6 684.4 L945.3 675.1 L936.6 669.9Z" fill="#9d9a91" stroke="#141412" stroke-width="1.0" stroke-linejoin="round" />
<path d="M936.6 669.9 L945.3 675.1 L954.1 668.7 L945.4 663.5Z" fill="#88857c" stroke="#141412" stroke-width="1.0" stroke-linejoin="round" />
<path d="M945.8 686.6 L958.8 694.5 L971.8 684.9 L971.8 683.5 L958.8 693.1 L945.8 685.2Z" fill="#3d3b36" stroke="#141412" stroke-width="0.7" stroke-linejoin="round" />
<path d="M958.8 693.1 L971.8 683.5 L968.3 677.2 L959.5 683.7Z" fill="#5f5c55" stroke="#141412" stroke-width="1.0" stroke-linejoin="round" />
<path d="M945.8 685.2 L958.8 693.1 L959.5 683.7 L950.8 678.5Z" fill="#9d9a91" stroke="#141412" stroke-width="1.0" stroke-linejoin="round" />
<path d="M950.8 678.5 L959.5 683.7 L968.3 677.2 L959.6 672.0Z" fill="#88857c" stroke="#141412" stroke-width="1.0" stroke-linejoin="round" />
<path d="M960.1 695.3 L973.2 703.3 L986.2 693.5 L986.2 692.1 L973.2 701.8 L960.1 693.8Z" fill="#3d3b36" stroke="#141412" stroke-width="0.7" stroke-linejoin="round" />
<path d="M973.2 701.8 L986.2 692.1 L982.7 685.9 L973.9 692.4Z" fill="#5f5c55" stroke="#141412" stroke-width="1.0" stroke-linejoin="round" />
<path d="M960.1 693.8 L973.2 701.8 L973.9 692.4 L965.1 687.1Z" fill="#9d9a91" stroke="#141412" stroke-width="1.0" stroke-linejoin="round" />
<path d="M965.1 687.1 L973.9 692.4 L982.7 685.9 L973.9 680.6Z" fill="#88857c" stroke="#141412" stroke-width="1.0" stroke-linejoin="round" />
<path d="M974.5 704.0 L987.7 712.1 L1000.7 702.3 L1000.7 700.9 L987.7 710.7 L974.5 702.6Z" fill="#3d3b36" stroke="#141412" stroke-width="0.7" stroke-linejoin="round" />
<path d="M987.7 710.7 L1000.7 700.9 L997.3 694.6 L988.5 701.2Z" fill="#5f5c55" stroke="#141412" stroke-width="1.0" stroke-linejoin="round" />
<path d="M974.5 702.6 L987.7 710.7 L988.5 701.2 L979.5 695.8Z" fill="#9d9a91" stroke="#141412" stroke-width="1.0" stroke-linejoin="round" />
<path d="M979.5 695.8 L988.5 701.2 L997.3 694.6 L988.3 689.2Z" fill="#88857c" stroke="#141412" stroke-width="1.0" stroke-linejoin="round" />
<path d="M989.0 712.9 L1002.4 721.1 L1015.4 711.2 L1015.4 709.7 L1002.5 719.6 L989.0 711.5Z" fill="#3d3b36" stroke="#141412" stroke-width="0.7" stroke-linejoin="round" />
<path d="M1002.5 719.6 L1015.4 709.7 L1012.0 703.4 L1003.2 710.1Z" fill="#5f5c55" stroke="#141412" stroke-width="1.0" stroke-linejoin="round" />
<path d="M989.0 711.5 L1002.5 719.6 L1003.2 710.1 L994.2 704.7Z" fill="#9d9a91" stroke="#141412" stroke-width="1.0" stroke-linejoin="round" />
<path d="M994.2 704.7 L1003.2 710.1 L1012.0 703.4 L1003.0 698.0Z" fill="#88857c" stroke="#141412" stroke-width="1.0" stroke-linejoin="round" />
<path d="M1003.7 721.8 L1017.3 730.1 L1030.3 720.1 L1030.3 718.7 L1017.3 728.7 L1003.7 720.4Z" fill="#3d3b36" stroke="#141412" stroke-width="0.7" stroke-linejoin="round" />
<path d="M1017.3 728.7 L1030.3 718.7 L1026.8 712.4 L1018.0 719.1Z" fill="#5f5c55" stroke="#141412" stroke-width="1.0" stroke-linejoin="round" />
<path d="M1003.7 720.4 L1017.3 728.7 L1018.0 719.1 L1008.9 713.6Z" fill="#9d9a91" stroke="#141412" stroke-width="1.0" stroke-linejoin="round" />
<path d="M1008.9 713.6 L1018.0 719.1 L1026.8 712.4 L1017.7 706.9Z" fill="#88857c" stroke="#141412" stroke-width="1.0" stroke-linejoin="round" />
<path d="M1018.6 730.9 L1032.3 739.2 L1045.3 729.2 L1045.3 727.7 L1032.3 737.8 L1018.6 729.5Z" fill="#3d3b36" stroke="#141412" stroke-width="0.7" stroke-linejoin="round" />
<path d="M1032.3 737.8 L1045.3 727.7 L1041.9 721.4 L1033.1 728.2Z" fill="#5f5c55" stroke="#141412" stroke-width="1.0" stroke-linejoin="round" />
<path d="M1018.6 729.5 L1032.3 737.8 L1033.1 728.2 L1023.9 722.6Z" fill="#9d9a91" stroke="#141412" stroke-width="1.0" stroke-linejoin="round" />
<path d="M1023.9 722.6 L1033.1 728.2 L1041.9 721.4 L1032.7 715.8Z" fill="#88857c" stroke="#141412" stroke-width="1.0" stroke-linejoin="round" />
<path d="M1033.6 740.0 L1047.5 748.5 L1060.5 738.3 L1060.5 736.9 L1047.5 747.1 L1033.6 738.6Z" fill="#3d3b36" stroke="#141412" stroke-width="0.7" stroke-linejoin="round" />
<path d="M1047.5 747.1 L1060.5 736.9 L1057.1 730.5 L1048.3 737.4Z" fill="#5f5c55" stroke="#141412" stroke-width="1.0" stroke-linejoin="round" />
<path d="M1033.6 738.6 L1047.5 747.1 L1048.3 737.4 L1039.0 731.8Z" fill="#9d9a91" stroke="#141412" stroke-width="1.0" stroke-linejoin="round" />
<path d="M1039.0 731.8 L1048.3 737.4 L1057.1 730.5 L1047.8 724.9Z" fill="#88857c" stroke="#141412" stroke-width="1.0" stroke-linejoin="round" />
<path d="M1048.8 749.3 L1062.9 757.8 L1075.9 747.6 L1075.9 746.1 L1062.9 756.4 L1048.9 747.9Z" fill="#3d3b36" stroke="#141412" stroke-width="0.7" stroke-linejoin="round" />
<path d="M1062.9 756.4 L1075.9 746.1 L1072.5 739.7 L1063.6 746.7Z" fill="#5f5c55" stroke="#141412" stroke-width="1.0" stroke-linejoin="round" />
<path d="M1048.9 747.9 L1062.9 756.4 L1063.6 746.7 L1054.2 741.0Z" fill="#9d9a91" stroke="#141412" stroke-width="1.0" stroke-linejoin="round" />
<path d="M1054.2 741.0 L1063.6 746.7 L1072.5 739.7 L1063.0 734.1Z" fill="#88857c" stroke="#141412" stroke-width="1.0" stroke-linejoin="round" />
<path d="M1064.2 758.7 L1078.4 767.3 L1091.4 756.9 L1091.5 755.5 L1078.4 765.8 L1064.2 757.2Z" fill="#3d3b36" stroke="#141412" stroke-width="0.7" stroke-linejoin="round" />
<path d="M1078.4 765.8 L1091.5 755.5 L1088.0 749.1 L1079.2 756.1Z" fill="#5f5c55" stroke="#141412" stroke-width="1.0" stroke-linejoin="round" />
<path d="M1064.2 757.2 L1078.4 765.8 L1079.2 756.1 L1069.7 750.3Z" fill="#9d9a91" stroke="#141412" stroke-width="1.0" stroke-linejoin="round" />
<path d="M1069.7 750.3 L1079.2 756.1 L1088.0 749.1 L1078.5 743.3Z" fill="#88857c" stroke="#141412" stroke-width="1.0" stroke-linejoin="round" />
<path d="M862.3 655.0 L881.4 666.7 L894.4 657.4 L894.4 656.0 L881.3 665.3 L862.2 653.6Z" fill="#3d3b36" stroke="#141412" stroke-width="0.7" stroke-linejoin="round" />
<path d="M881.3 665.3 L894.4 656.0 L890.8 649.8 L882.0 656.1Z" fill="#5f5c55" stroke="#141412" stroke-width="1.0" stroke-linejoin="round" />
<path d="M862.2 653.6 L881.3 665.3 L882.0 656.1 L867.0 646.9Z" fill="#9d9a91" stroke="#141412" stroke-width="1.0" stroke-linejoin="round" />
<path d="M867.0 646.9 L882.0 656.1 L890.8 649.8 L875.8 640.7Z" fill="#88857c" stroke="#141412" stroke-width="1.0" stroke-linejoin="round" />
<path d="M882.6 667.5 L895.1 675.2 L908.1 665.8 L908.1 664.3 L895.0 673.8 L882.5 666.1Z" fill="#3d3b36" stroke="#141412" stroke-width="0.7" stroke-linejoin="round" />
<path d="M895.0 673.8 L908.1 664.3 L904.6 658.2 L895.7 664.5Z" fill="#5f5c55" stroke="#141412" stroke-width="1.0" stroke-linejoin="round" />
<path d="M882.5 666.1 L895.0 673.8 L895.7 664.5 L887.3 659.4Z" fill="#9d9a91" stroke="#141412" stroke-width="1.0" stroke-linejoin="round" />
<path d="M887.3 659.4 L895.7 664.5 L904.6 658.2 L896.2 653.1Z" fill="#88857c" stroke="#141412" stroke-width="1.0" stroke-linejoin="round" />
<path d="M896.3 675.9 L908.9 683.7 L921.9 674.2 L921.9 672.8 L908.9 682.3 L896.2 674.5Z" fill="#3d3b36" stroke="#141412" stroke-width="0.7" stroke-linejoin="round" />
<path d="M908.9 682.3 L921.9 672.8 L918.4 666.6 L909.6 673.0Z" fill="#5f5c55" stroke="#141412" stroke-width="1.0" stroke-linejoin="round" />
<path d="M896.2 674.5 L908.9 682.3 L909.6 673.0 L901.1 667.8Z" fill="#9d9a91" stroke="#141412" stroke-width="1.0" stroke-linejoin="round" />
<path d="M901.1 667.8 L909.6 673.0 L918.4 666.6 L909.9 661.4Z" fill="#88857c" stroke="#141412" stroke-width="1.0" stroke-linejoin="round" />
<path d="M910.1 684.4 L922.9 692.3 L935.9 682.7 L935.9 681.3 L922.9 690.9 L910.1 683.0Z" fill="#3d3b36" stroke="#141412" stroke-width="0.7" stroke-linejoin="round" />
<path d="M922.9 690.9 L935.9 681.3 L932.4 675.1 L923.6 681.6Z" fill="#5f5c55" stroke="#141412" stroke-width="1.0" stroke-linejoin="round" />
<path d="M910.1 683.0 L922.9 690.9 L923.6 681.6 L915.0 676.3Z" fill="#9d9a91" stroke="#141412" stroke-width="1.0" stroke-linejoin="round" />
<path d="M915.0 676.3 L923.6 681.6 L932.4 675.1 L923.8 669.9Z" fill="#88857c" stroke="#141412" stroke-width="1.0" stroke-linejoin="round" />
<path d="M924.1 693.1 L937.0 701.0 L950.1 691.4 L950.1 689.9 L937.0 699.6 L924.1 691.7Z" fill="#3d3b36" stroke="#141412" stroke-width="0.7" stroke-linejoin="round" />
<path d="M937.0 699.6 L950.1 689.9 L946.6 683.7 L937.7 690.2Z" fill="#5f5c55" stroke="#141412" stroke-width="1.0" stroke-linejoin="round" />
<path d="M924.1 691.7 L937.0 699.6 L937.7 690.2 L929.0 684.9Z" fill="#9d9a91" stroke="#141412" stroke-width="1.0" stroke-linejoin="round" />
<path d="M929.0 684.9 L937.7 690.2 L946.6 683.7 L937.9 678.4Z" fill="#88857c" stroke="#141412" stroke-width="1.0" stroke-linejoin="round" />
<path d="M938.3 701.8 L951.3 709.8 L964.4 700.1 L964.4 698.7 L951.3 708.4 L938.2 700.4Z" fill="#3d3b36" stroke="#141412" stroke-width="0.7" stroke-linejoin="round" />
<path d="M951.3 708.4 L964.4 698.7 L960.9 692.4 L952.0 699.0Z" fill="#5f5c55" stroke="#141412" stroke-width="1.0" stroke-linejoin="round" />
<path d="M938.2 700.4 L951.3 708.4 L952.0 699.0 L943.2 693.6Z" fill="#9d9a91" stroke="#141412" stroke-width="1.0" stroke-linejoin="round" />
<path d="M943.2 693.6 L952.0 699.0 L960.9 692.4 L952.1 687.1Z" fill="#88857c" stroke="#141412" stroke-width="1.0" stroke-linejoin="round" />
<path d="M952.6 710.6 L965.8 718.7 L978.8 708.9 L978.8 707.5 L965.8 717.3 L952.6 709.2Z" fill="#3d3b36" stroke="#141412" stroke-width="0.7" stroke-linejoin="round" />
<path d="M965.8 717.3 L978.8 707.5 L975.3 701.2 L966.5 707.8Z" fill="#5f5c55" stroke="#141412" stroke-width="1.0" stroke-linejoin="round" />
<path d="M952.6 709.2 L965.8 717.3 L966.5 707.8 L957.6 702.4Z" fill="#9d9a91" stroke="#141412" stroke-width="1.0" stroke-linejoin="round" />
<path d="M957.6 702.4 L966.5 707.8 L975.3 701.2 L966.5 695.8Z" fill="#88857c" stroke="#141412" stroke-width="1.0" stroke-linejoin="round" />
<path d="M967.0 719.5 L980.4 727.7 L993.5 717.8 L993.5 716.4 L980.4 726.3 L967.0 718.1Z" fill="#3d3b36" stroke="#141412" stroke-width="0.7" stroke-linejoin="round" />
<path d="M980.4 726.3 L993.5 716.4 L990.0 710.1 L981.1 716.8Z" fill="#5f5c55" stroke="#141412" stroke-width="1.0" stroke-linejoin="round" />
<path d="M967.0 718.1 L980.4 726.3 L981.1 716.8 L972.1 711.3Z" fill="#9d9a91" stroke="#141412" stroke-width="1.0" stroke-linejoin="round" />
<path d="M972.1 711.3 L981.1 716.8 L990.0 710.1 L981.0 704.6Z" fill="#88857c" stroke="#141412" stroke-width="1.0" stroke-linejoin="round" />
<path d="M981.6 728.5 L995.1 736.8 L1008.2 726.8 L1008.3 725.4 L995.1 735.4 L981.6 727.1Z" fill="#3d3b36" stroke="#141412" stroke-width="0.7" stroke-linejoin="round" />
<path d="M995.1 735.4 L1008.3 725.4 L1004.8 719.0 L995.9 725.8Z" fill="#5f5c55" stroke="#141412" stroke-width="1.0" stroke-linejoin="round" />
<path d="M981.6 727.1 L995.1 735.4 L995.9 725.8 L986.8 720.3Z" fill="#9d9a91" stroke="#141412" stroke-width="1.0" stroke-linejoin="round" />
<path d="M986.8 720.3 L995.9 725.8 L1004.8 719.0 L995.7 713.5Z" fill="#88857c" stroke="#141412" stroke-width="1.0" stroke-linejoin="round" />
<path d="M996.4 737.6 L1010.1 746.0 L1023.2 735.9 L1023.2 734.5 L1010.1 744.6 L996.4 736.2Z" fill="#3d3b36" stroke="#141412" stroke-width="0.7" stroke-linejoin="round" />
<path d="M1010.1 744.6 L1023.2 734.5 L1019.7 728.1 L1010.8 735.0Z" fill="#5f5c55" stroke="#141412" stroke-width="1.0" stroke-linejoin="round" />
<path d="M996.4 736.2 L1010.1 744.6 L1010.8 735.0 L1001.6 729.4Z" fill="#9d9a91" stroke="#141412" stroke-width="1.0" stroke-linejoin="round" />
<path d="M1001.6 729.4 L1010.8 735.0 L1019.7 728.1 L1010.5 722.6Z" fill="#88857c" stroke="#141412" stroke-width="1.0" stroke-linejoin="round" />
<path d="M1011.4 746.8 L1025.1 755.3 L1038.3 745.1 L1038.3 743.7 L1025.2 753.9 L1011.4 745.4Z" fill="#3d3b36" stroke="#141412" stroke-width="0.7" stroke-linejoin="round" />
<path d="M1025.2 753.9 L1038.3 743.7 L1034.8 737.3 L1025.9 744.2Z" fill="#5f5c55" stroke="#141412" stroke-width="1.0" stroke-linejoin="round" />
<path d="M1011.4 745.4 L1025.2 753.9 L1025.9 744.2 L1016.6 738.5Z" fill="#9d9a91" stroke="#141412" stroke-width="1.0" stroke-linejoin="round" />
<path d="M1016.6 738.5 L1025.9 744.2 L1034.8 737.3 L1025.6 731.7Z" fill="#88857c" stroke="#141412" stroke-width="1.0" stroke-linejoin="round" />
<path d="M1026.5 756.1 L1040.4 764.7 L1053.5 754.4 L1053.6 753.0 L1040.4 763.3 L1026.5 754.7Z" fill="#3d3b36" stroke="#141412" stroke-width="0.7" stroke-linejoin="round" />
<path d="M1040.4 763.3 L1053.6 753.0 L1050.1 746.6 L1041.2 753.6Z" fill="#5f5c55" stroke="#141412" stroke-width="1.0" stroke-linejoin="round" />
<path d="M1026.5 754.7 L1040.4 763.3 L1041.2 753.6 L1031.8 747.8Z" fill="#9d9a91" stroke="#141412" stroke-width="1.0" stroke-linejoin="round" />
<path d="M1031.8 747.8 L1041.2 753.6 L1050.1 746.6 L1040.7 740.9Z" fill="#88857c" stroke="#141412" stroke-width="1.0" stroke-linejoin="round" />
<path d="M1041.7 765.6 L1063.6 779.1 L1076.8 768.6 L1076.8 767.1 L1063.7 777.6 L1041.8 764.1Z" fill="#3d3b36" stroke="#141412" stroke-width="0.7" stroke-linejoin="round" />
<path d="M1063.7 777.6 L1076.8 767.1 L1073.3 760.7 L1064.4 767.8Z" fill="#5f5c55" stroke="#141412" stroke-width="1.0" stroke-linejoin="round" />
<path d="M1041.8 764.1 L1063.7 777.6 L1064.4 767.8 L1047.2 757.2Z" fill="#9d9a91" stroke="#141412" stroke-width="1.0" stroke-linejoin="round" />
<path d="M1047.2 757.2 L1064.4 767.8 L1073.3 760.7 L1056.1 750.2Z" fill="#88857c" stroke="#141412" stroke-width="1.0" stroke-linejoin="round" />
<path d="M1074.4 796.7 L1091.3 807.2 L1109.3 792.7 L1109.3 791.2 L1091.4 805.8 L1074.5 795.3Z" fill="#3d3b36" stroke="#141412" stroke-width="0.7" stroke-linejoin="round" />
<path d="M1091.4 805.8 L1109.3 791.2 L1105.9 784.7 L1092.2 795.8Z" fill="#5f5c55" stroke="#141412" stroke-width="1.0" stroke-linejoin="round" />
<path d="M1074.5 795.3 L1091.4 805.8 L1092.2 795.8 L1080.0 788.3Z" fill="#9d9a91" stroke="#141412" stroke-width="1.0" stroke-linejoin="round" />
<path d="M1080.0 788.3 L1092.2 795.8 L1105.9 784.7 L1093.7 777.3Z" fill="#88857c" stroke="#141412" stroke-width="1.0" stroke-linejoin="round" />
<path d="M1087.8 812.1 L1105.0 822.8 L1124.6 806.7 L1124.7 805.2 L1105.0 821.3 L1087.9 810.6Z" fill="#3d3b36" stroke="#141412" stroke-width="0.7" stroke-linejoin="round" />
<path d="M1105.0 821.3 L1124.7 805.2 L1121.2 798.7 L1105.8 811.3Z" fill="#5f5c55" stroke="#141412" stroke-width="1.0" stroke-linejoin="round" />
<path d="M1087.9 810.6 L1105.0 821.3 L1105.8 811.3 L1093.5 803.7Z" fill="#9d9a91" stroke="#141412" stroke-width="1.0" stroke-linejoin="round" />
<path d="M1093.5 803.7 L1105.8 811.3 L1121.2 798.7 L1108.8 791.2Z" fill="#88857c" stroke="#141412" stroke-width="1.0" stroke-linejoin="round" />
<path d="M847.6 665.4 L870.1 679.4 L883.2 670.0 L883.1 668.6 L870.0 678.0 L847.5 664.0Z" fill="#3d3b36" stroke="#141412" stroke-width="0.7" stroke-linejoin="round" />
<path d="M870.0 678.0 L883.1 668.6 L879.6 662.4 L870.7 668.8Z" fill="#5f5c55" stroke="#141412" stroke-width="1.0" stroke-linejoin="round" />
<path d="M847.5 664.0 L870.0 678.0 L870.7 668.8 L852.2 657.4Z" fill="#9d9a91" stroke="#141412" stroke-width="1.0" stroke-linejoin="round" />
<path d="M852.2 657.4 L870.7 668.8 L879.6 662.4 L861.1 651.1Z" fill="#88857c" stroke="#141412" stroke-width="1.0" stroke-linejoin="round" />
<path d="M871.2 680.2 L883.8 688.0 L896.9 678.5 L896.9 677.1 L883.7 686.6 L871.2 678.8Z" fill="#3d3b36" stroke="#141412" stroke-width="0.7" stroke-linejoin="round" />
<path d="M883.7 686.6 L896.9 677.1 L893.3 670.9 L884.4 677.3Z" fill="#5f5c55" stroke="#141412" stroke-width="1.0" stroke-linejoin="round" />
<path d="M871.2 678.8 L883.7 686.6 L884.4 677.3 L876.0 672.1Z" fill="#9d9a91" stroke="#141412" stroke-width="1.0" stroke-linejoin="round" />
<path d="M876.0 672.1 L884.4 677.3 L893.3 670.9 L884.9 665.7Z" fill="#88857c" stroke="#141412" stroke-width="1.0" stroke-linejoin="round" />
<path d="M885.0 688.7 L897.6 696.6 L910.8 687.0 L910.8 685.6 L897.6 695.2 L884.9 687.3Z" fill="#3d3b36" stroke="#141412" stroke-width="0.7" stroke-linejoin="round" />
<path d="M897.6 695.2 L910.8 685.6 L907.2 679.4 L898.3 685.9Z" fill="#5f5c55" stroke="#141412" stroke-width="1.0" stroke-linejoin="round" />
<path d="M884.9 687.3 L897.6 695.2 L898.3 685.9 L889.8 680.6Z" fill="#9d9a91" stroke="#141412" stroke-width="1.0" stroke-linejoin="round" />
<path d="M889.8 680.6 L898.3 685.9 L907.2 679.4 L898.7 674.2Z" fill="#88857c" stroke="#141412" stroke-width="1.0" stroke-linejoin="round" />
<path d="M898.8 697.4 L911.6 705.4 L924.8 695.7 L924.8 694.3 L911.6 704.0 L898.8 696.0Z" fill="#3d3b36" stroke="#141412" stroke-width="0.7" stroke-linejoin="round" />
<path d="M911.6 704.0 L924.8 694.3 L921.2 688.0 L912.3 694.6Z" fill="#5f5c55" stroke="#141412" stroke-width="1.0" stroke-linejoin="round" />
<path d="M898.8 696.0 L911.6 704.0 L912.3 694.6 L903.7 689.3Z" fill="#9d9a91" stroke="#141412" stroke-width="1.0" stroke-linejoin="round" />
<path d="M903.7 689.3 L912.3 694.6 L921.2 688.0 L912.6 682.7Z" fill="#88857c" stroke="#141412" stroke-width="1.0" stroke-linejoin="round" />
<path d="M912.8 706.1 L925.8 714.2 L939.0 704.4 L939.0 703.0 L925.8 712.8 L912.8 704.7Z" fill="#3d3b36" stroke="#141412" stroke-width="0.7" stroke-linejoin="round" />
<path d="M925.8 712.8 L939.0 703.0 L935.4 696.7 L926.5 703.4Z" fill="#5f5c55" stroke="#141412" stroke-width="1.0" stroke-linejoin="round" />
<path d="M912.8 704.7 L925.8 712.8 L926.5 703.4 L917.8 698.0Z" fill="#9d9a91" stroke="#141412" stroke-width="1.0" stroke-linejoin="round" />
<path d="M917.8 698.0 L926.5 703.4 L935.4 696.7 L926.7 691.4Z" fill="#88857c" stroke="#141412" stroke-width="1.0" stroke-linejoin="round" />
<path d="M927.0 715.0 L940.1 723.1 L953.3 713.3 L953.3 711.8 L940.1 721.7 L927.0 713.6Z" fill="#3d3b36" stroke="#141412" stroke-width="0.7" stroke-linejoin="round" />
<path d="M940.1 721.7 L953.3 711.8 L949.7 705.6 L940.8 712.2Z" fill="#5f5c55" stroke="#141412" stroke-width="1.0" stroke-linejoin="round" />
<path d="M927.0 713.6 L940.1 721.7 L940.8 712.2 L932.0 706.8Z" fill="#9d9a91" stroke="#141412" stroke-width="1.0" stroke-linejoin="round" />
<path d="M932.0 706.8 L940.8 712.2 L949.7 705.6 L941.0 700.2Z" fill="#88857c" stroke="#141412" stroke-width="1.0" stroke-linejoin="round" />
<path d="M941.3 723.9 L954.6 732.2 L967.8 722.2 L967.8 720.8 L954.6 730.7 L941.3 722.5Z" fill="#3d3b36" stroke="#141412" stroke-width="0.7" stroke-linejoin="round" />
<path d="M954.6 730.7 L967.8 720.8 L964.2 714.5 L955.3 721.2Z" fill="#5f5c55" stroke="#141412" stroke-width="1.0" stroke-linejoin="round" />
<path d="M941.3 722.5 L954.6 730.7 L955.3 721.2 L946.4 715.7Z" fill="#9d9a91" stroke="#141412" stroke-width="1.0" stroke-linejoin="round" />
<path d="M946.4 715.7 L955.3 721.2 L964.2 714.5 L955.4 709.0Z" fill="#88857c" stroke="#141412" stroke-width="1.0" stroke-linejoin="round" />
<path d="M955.8 733.0 L969.2 741.3 L982.4 731.2 L982.4 729.8 L969.2 739.9 L955.8 731.5Z" fill="#3d3b36" stroke="#141412" stroke-width="0.7" stroke-linejoin="round" />
<path d="M969.2 739.9 L982.4 729.8 L978.9 723.5 L969.9 730.3Z" fill="#5f5c55" stroke="#141412" stroke-width="1.0" stroke-linejoin="round" />
<path d="M955.8 731.5 L969.2 739.9 L969.9 730.3 L960.9 724.7Z" fill="#9d9a91" stroke="#141412" stroke-width="1.0" stroke-linejoin="round" />
<path d="M960.9 724.7 L969.9 730.3 L978.9 723.5 L969.9 718.0Z" fill="#88857c" stroke="#141412" stroke-width="1.0" stroke-linejoin="round" />
<path d="M970.5 742.1 L984.0 750.5 L997.2 740.4 L997.2 738.9 L984.0 749.1 L970.5 740.7Z" fill="#3d3b36" stroke="#141412" stroke-width="0.7" stroke-linejoin="round" />
<path d="M984.0 749.1 L997.2 738.9 L993.7 732.6 L984.7 739.5Z" fill="#5f5c55" stroke="#141412" stroke-width="1.0" stroke-linejoin="round" />
<path d="M970.5 740.7 L984.0 749.1 L984.7 739.5 L975.6 733.8Z" fill="#9d9a91" stroke="#141412" stroke-width="1.0" stroke-linejoin="round" />
<path d="M975.6 733.8 L984.7 739.5 L993.7 732.6 L984.6 727.0Z" fill="#88857c" stroke="#141412" stroke-width="1.0" stroke-linejoin="round" />
<path d="M985.3 751.3 L998.9 759.9 L1012.2 749.6 L1012.2 748.2 L999.0 758.4 L985.3 749.9Z" fill="#3d3b36" stroke="#141412" stroke-width="0.7" stroke-linejoin="round" />
<path d="M999.0 758.4 L1012.2 748.2 L1008.7 741.8 L999.7 748.7Z" fill="#5f5c55" stroke="#141412" stroke-width="1.0" stroke-linejoin="round" />
<path d="M985.3 749.9 L999.0 758.4 L999.7 748.7 L990.5 743.0Z" fill="#9d9a91" stroke="#141412" stroke-width="1.0" stroke-linejoin="round" />
<path d="M990.5 743.0 L999.7 748.7 L1008.7 741.8 L999.5 736.2Z" fill="#88857c" stroke="#141412" stroke-width="1.0" stroke-linejoin="round" />
<path d="M1000.2 760.7 L1014.1 769.3 L1027.3 759.0 L1027.3 757.5 L1014.1 767.9 L1000.3 759.2Z" fill="#3d3b36" stroke="#141412" stroke-width="0.7" stroke-linejoin="round" />
<path d="M1014.1 767.9 L1027.3 757.5 L1023.8 751.1 L1014.8 758.1Z" fill="#5f5c55" stroke="#141412" stroke-width="1.0" stroke-linejoin="round" />
<path d="M1000.3 759.2 L1014.1 767.9 L1014.8 758.1 L1005.5 752.4Z" fill="#9d9a91" stroke="#141412" stroke-width="1.0" stroke-linejoin="round" />
<path d="M1005.5 752.4 L1014.8 758.1 L1023.8 751.1 L1014.5 745.4Z" fill="#88857c" stroke="#141412" stroke-width="1.0" stroke-linejoin="round" />
<path d="M1015.4 770.1 L1029.4 778.8 L1042.6 768.4 L1042.7 766.9 L1029.4 777.4 L1015.4 768.7Z" fill="#3d3b36" stroke="#141412" stroke-width="0.7" stroke-linejoin="round" />
<path d="M1029.4 777.4 L1042.7 766.9 L1039.1 760.5 L1030.1 767.6Z" fill="#5f5c55" stroke="#141412" stroke-width="1.0" stroke-linejoin="round" />
<path d="M1015.4 768.7 L1029.4 777.4 L1030.1 767.6 L1020.8 761.8Z" fill="#9d9a91" stroke="#141412" stroke-width="1.0" stroke-linejoin="round" />
<path d="M1020.8 761.8 L1030.1 767.6 L1039.1 760.5 L1029.7 754.8Z" fill="#88857c" stroke="#141412" stroke-width="1.0" stroke-linejoin="round" />
<path d="M1030.7 779.7 L1048.7 790.9 L1062.0 780.4 L1062.0 778.9 L1048.8 789.5 L1030.7 778.2Z" fill="#3d3b36" stroke="#141412" stroke-width="0.7" stroke-linejoin="round" />
<path d="M1048.8 789.5 L1062.0 778.9 L1058.5 772.5 L1049.5 779.6Z" fill="#5f5c55" stroke="#141412" stroke-width="1.0" stroke-linejoin="round" />
<path d="M1030.7 778.2 L1048.8 789.5 L1049.5 779.6 L1036.1 771.3Z" fill="#9d9a91" stroke="#141412" stroke-width="1.0" stroke-linejoin="round" />
<path d="M1036.1 771.3 L1049.5 779.6 L1058.5 772.5 L1045.1 764.2Z" fill="#88857c" stroke="#141412" stroke-width="1.0" stroke-linejoin="round" />
<path d="M832.7 676.0 L862.0 694.5 L875.3 684.9 L875.2 683.5 L862.0 693.0 L832.7 674.5Z" fill="#3d3b36" stroke="#141412" stroke-width="0.7" stroke-linejoin="round" />
<path d="M862.0 693.0 L875.2 683.5 L871.6 677.3 L862.7 683.7Z" fill="#5f5c55" stroke="#141412" stroke-width="1.0" stroke-linejoin="round" />
<path d="M832.7 674.5 L862.0 693.0 L862.7 683.7 L837.4 667.9Z" fill="#9d9a91" stroke="#141412" stroke-width="1.0" stroke-linejoin="round" />
<path d="M837.4 667.9 L862.7 683.7 L871.6 677.3 L846.4 661.5Z" fill="#88857c" stroke="#141412" stroke-width="1.0" stroke-linejoin="round" />
<path d="M863.2 695.2 L875.8 703.1 L889.1 693.5 L889.0 692.1 L875.7 701.7 L863.2 693.8Z" fill="#3d3b36" stroke="#141412" stroke-width="0.7" stroke-linejoin="round" />
<path d="M875.7 701.7 L889.0 692.1 L885.4 685.9 L876.4 692.4Z" fill="#5f5c55" stroke="#141412" stroke-width="1.0" stroke-linejoin="round" />
<path d="M863.2 693.8 L875.7 701.7 L876.4 692.4 L868.0 687.1Z" fill="#9d9a91" stroke="#141412" stroke-width="1.0" stroke-linejoin="round" />
<path d="M868.0 687.1 L876.4 692.4 L885.4 685.9 L877.0 680.6Z" fill="#88857c" stroke="#141412" stroke-width="1.0" stroke-linejoin="round" />
<path d="M877.0 703.9 L889.7 711.9 L903.0 702.2 L903.0 700.8 L889.7 710.5 L876.9 702.5Z" fill="#3d3b36" stroke="#141412" stroke-width="0.7" stroke-linejoin="round" />
<path d="M889.7 710.5 L903.0 700.8 L899.4 694.5 L890.4 701.1Z" fill="#5f5c55" stroke="#141412" stroke-width="1.0" stroke-linejoin="round" />
<path d="M876.9 702.5 L889.7 710.5 L890.4 701.1 L881.8 695.8Z" fill="#9d9a91" stroke="#141412" stroke-width="1.0" stroke-linejoin="round" />
<path d="M881.8 695.8 L890.4 701.1 L899.4 694.5 L890.8 689.2Z" fill="#88857c" stroke="#141412" stroke-width="1.0" stroke-linejoin="round" />
<path d="M890.9 712.7 L903.8 720.8 L917.1 711.0 L917.0 709.6 L903.7 719.4 L890.9 711.3Z" fill="#3d3b36" stroke="#141412" stroke-width="0.7" stroke-linejoin="round" />
<path d="M903.7 719.4 L917.0 709.6 L913.5 703.3 L904.4 710.0Z" fill="#5f5c55" stroke="#141412" stroke-width="1.0" stroke-linejoin="round" />
<path d="M890.9 711.3 L903.7 719.4 L904.4 710.0 L895.8 704.5Z" fill="#9d9a91" stroke="#141412" stroke-width="1.0" stroke-linejoin="round" />
<path d="M895.8 704.5 L904.4 710.0 L913.5 703.3 L904.8 697.9Z" fill="#88857c" stroke="#141412" stroke-width="1.0" stroke-linejoin="round" />
<path d="M905.0 721.6 L918.0 729.8 L931.3 719.9 L931.3 718.5 L918.0 728.4 L905.0 720.2Z" fill="#3d3b36" stroke="#141412" stroke-width="0.7" stroke-linejoin="round" />
<path d="M918.0 728.4 L931.3 718.5 L927.7 712.2 L918.7 718.9Z" fill="#5f5c55" stroke="#141412" stroke-width="1.0" stroke-linejoin="round" />
<path d="M905.0 720.2 L918.0 728.4 L918.7 718.9 L909.9 713.4Z" fill="#9d9a91" stroke="#141412" stroke-width="1.0" stroke-linejoin="round" />
<path d="M909.9 713.4 L918.7 718.9 L927.7 712.2 L919.0 706.7Z" fill="#88857c" stroke="#141412" stroke-width="1.0" stroke-linejoin="round" />
<path d="M919.2 730.6 L932.4 738.9 L945.7 728.9 L945.7 727.4 L932.3 737.5 L919.2 729.2Z" fill="#3d3b36" stroke="#141412" stroke-width="0.7" stroke-linejoin="round" />
<path d="M932.3 737.5 L945.7 727.4 L942.1 721.1 L933.1 727.9Z" fill="#5f5c55" stroke="#141412" stroke-width="1.0" stroke-linejoin="round" />
<path d="M919.2 729.2 L932.3 737.5 L933.1 727.9 L924.2 722.4Z" fill="#9d9a91" stroke="#141412" stroke-width="1.0" stroke-linejoin="round" />
<path d="M924.2 722.4 L933.1 727.9 L942.1 721.1 L933.3 715.6Z" fill="#88857c" stroke="#141412" stroke-width="1.0" stroke-linejoin="round" />
<path d="M933.6 739.7 L946.9 748.1 L960.2 738.0 L960.2 736.5 L946.9 746.6 L933.6 738.2Z" fill="#3d3b36" stroke="#141412" stroke-width="0.7" stroke-linejoin="round" />
<path d="M946.9 746.6 L960.2 736.5 L956.6 730.2 L947.6 737.0Z" fill="#5f5c55" stroke="#141412" stroke-width="1.0" stroke-linejoin="round" />
<path d="M933.6 738.2 L946.9 746.6 L947.6 737.0 L938.7 731.4Z" fill="#9d9a91" stroke="#141412" stroke-width="1.0" stroke-linejoin="round" />
<path d="M938.7 731.4 L947.6 737.0 L956.6 730.2 L947.7 724.7Z" fill="#88857c" stroke="#141412" stroke-width="1.0" stroke-linejoin="round" />
<path d="M948.2 748.9 L961.6 757.4 L974.9 747.2 L974.9 745.7 L961.6 755.9 L948.1 747.4Z" fill="#3d3b36" stroke="#141412" stroke-width="0.7" stroke-linejoin="round" />
<path d="M961.6 755.9 L974.9 745.7 L971.4 739.4 L962.3 746.3Z" fill="#5f5c55" stroke="#141412" stroke-width="1.0" stroke-linejoin="round" />
<path d="M948.1 747.4 L961.6 755.9 L962.3 746.3 L953.3 740.6Z" fill="#9d9a91" stroke="#141412" stroke-width="1.0" stroke-linejoin="round" />
<path d="M953.3 740.6 L962.3 746.3 L971.4 739.4 L962.3 733.8Z" fill="#88857c" stroke="#141412" stroke-width="1.0" stroke-linejoin="round" />
<path d="M962.9 758.2 L976.4 766.7 L989.8 756.4 L989.8 755.0 L976.5 765.3 L962.9 756.7Z" fill="#3d3b36" stroke="#141412" stroke-width="0.7" stroke-linejoin="round" />
<path d="M976.5 765.3 L989.8 755.0 L986.2 748.6 L977.2 755.6Z" fill="#5f5c55" stroke="#141412" stroke-width="1.0" stroke-linejoin="round" />
<path d="M962.9 756.7 L976.5 765.3 L977.2 755.6 L968.1 749.9Z" fill="#9d9a91" stroke="#141412" stroke-width="1.0" stroke-linejoin="round" />
<path d="M968.1 749.9 L977.2 755.6 L986.2 748.6 L977.1 743.0Z" fill="#88857c" stroke="#141412" stroke-width="1.0" stroke-linejoin="round" />
<path d="M977.7 767.6 L991.5 776.2 L1004.8 765.8 L1004.9 764.4 L991.5 774.8 L977.7 766.1Z" fill="#3d3b36" stroke="#141412" stroke-width="0.7" stroke-linejoin="round" />
<path d="M991.5 774.8 L1004.9 764.4 L1001.3 758.0 L992.2 765.0Z" fill="#5f5c55" stroke="#141412" stroke-width="1.0" stroke-linejoin="round" />
<path d="M977.7 766.1 L991.5 774.8 L992.2 765.0 L983.0 759.2Z" fill="#9d9a91" stroke="#141412" stroke-width="1.0" stroke-linejoin="round" />
<path d="M983.0 759.2 L992.2 765.0 L1001.3 758.0 L992.1 752.3Z" fill="#88857c" stroke="#141412" stroke-width="1.0" stroke-linejoin="round" />
<path d="M992.8 777.1 L1006.7 785.8 L1020.1 775.3 L1020.1 773.9 L1006.7 784.4 L992.8 775.6Z" fill="#3d3b36" stroke="#141412" stroke-width="0.7" stroke-linejoin="round" />
<path d="M1006.7 784.4 L1020.1 773.9 L1016.5 767.5 L1007.4 774.6Z" fill="#5f5c55" stroke="#141412" stroke-width="1.0" stroke-linejoin="round" />
<path d="M992.8 775.6 L1006.7 784.4 L1007.4 774.6 L998.1 768.7Z" fill="#9d9a91" stroke="#141412" stroke-width="1.0" stroke-linejoin="round" />
<path d="M998.1 768.7 L1007.4 774.6 L1016.5 767.5 L1007.2 761.7Z" fill="#88857c" stroke="#141412" stroke-width="1.0" stroke-linejoin="round" />
<path d="M1008.0 786.7 L1033.7 802.9 L1047.1 792.2 L1047.1 790.8 L1033.7 801.4 L1008.0 785.2Z" fill="#3d3b36" stroke="#141412" stroke-width="0.7" stroke-linejoin="round" />
<path d="M1033.7 801.4 L1047.1 790.8 L1043.6 784.3 L1034.5 791.5Z" fill="#5f5c55" stroke="#141412" stroke-width="1.0" stroke-linejoin="round" />
<path d="M1008.0 785.2 L1033.7 801.4 L1034.5 791.5 L1013.4 778.3Z" fill="#9d9a91" stroke="#141412" stroke-width="1.0" stroke-linejoin="round" />
<path d="M1013.4 778.3 L1034.5 791.5 L1043.6 784.3 L1022.5 771.2Z" fill="#88857c" stroke="#141412" stroke-width="1.0" stroke-linejoin="round" />
<path d="M1053.6 816.8 L1070.5 827.5 L1090.4 811.3 L1090.4 809.9 L1070.6 826.0 L1053.6 815.3Z" fill="#3d3b36" stroke="#141412" stroke-width="0.7" stroke-linejoin="round" />
<path d="M1070.6 826.0 L1090.4 809.9 L1086.9 803.4 L1071.3 816.0Z" fill="#5f5c55" stroke="#141412" stroke-width="1.0" stroke-linejoin="round" />
<path d="M1053.6 815.3 L1070.6 826.0 L1071.3 816.0 L1059.1 808.3Z" fill="#9d9a91" stroke="#141412" stroke-width="1.0" stroke-linejoin="round" />
<path d="M1059.1 808.3 L1071.3 816.0 L1086.9 803.4 L1074.7 795.8Z" fill="#88857c" stroke="#141412" stroke-width="1.0" stroke-linejoin="round" />
<path d="M1068.6 831.1 L1084.6 841.2 L1104.5 824.9 L1104.5 823.4 L1084.6 839.8 L1068.6 829.6Z" fill="#3d3b36" stroke="#141412" stroke-width="0.7" stroke-linejoin="round" />
<path d="M1084.6 839.8 L1104.5 823.4 L1101.0 816.9 L1085.4 829.6Z" fill="#5f5c55" stroke="#141412" stroke-width="1.0" stroke-linejoin="round" />
<path d="M1068.6 829.6 L1084.6 839.8 L1085.4 829.6 L1074.2 822.6Z" fill="#9d9a91" stroke="#141412" stroke-width="1.0" stroke-linejoin="round" />
<path d="M1074.2 822.6 L1085.4 829.6 L1101.0 816.9 L1089.8 809.9Z" fill="#88857c" stroke="#141412" stroke-width="1.0" stroke-linejoin="round" />
<path d="M851.4 708.1 L862.9 715.4 L876.3 705.7 L876.2 704.3 L862.8 714.0 L851.3 706.7Z" fill="#3d3b36" stroke="#141412" stroke-width="0.7" stroke-linejoin="round" />
<path d="M862.8 714.0 L876.2 704.3 L872.6 698.0 L863.5 704.6Z" fill="#5f5c55" stroke="#141412" stroke-width="1.0" stroke-linejoin="round" />
<path d="M851.3 706.7 L862.8 714.0 L863.5 704.6 L856.2 700.0Z" fill="#9d9a91" stroke="#141412" stroke-width="1.0" stroke-linejoin="round" />
<path d="M856.2 700.0 L863.5 704.6 L872.6 698.0 L865.2 693.4Z" fill="#88857c" stroke="#141412" stroke-width="1.0" stroke-linejoin="round" />
<path d="M864.1 716.2 L875.4 723.4 L888.8 713.6 L888.8 712.2 L875.3 722.0 L864.0 714.8Z" fill="#3d3b36" stroke="#141412" stroke-width="0.7" stroke-linejoin="round" />
<path d="M875.3 722.0 L888.8 712.2 L885.1 705.9 L876.0 712.6Z" fill="#5f5c55" stroke="#141412" stroke-width="1.0" stroke-linejoin="round" />
<path d="M864.0 714.8 L875.3 722.0 L876.0 712.6 L868.9 708.1Z" fill="#9d9a91" stroke="#141412" stroke-width="1.0" stroke-linejoin="round" />
<path d="M868.9 708.1 L876.0 712.6 L885.1 705.9 L878.0 701.4Z" fill="#88857c" stroke="#141412" stroke-width="1.0" stroke-linejoin="round" />
<path d="M876.6 724.2 L967.0 782.1 L980.5 771.6 L980.5 770.2 L967.0 780.6 L876.6 722.8Z" fill="#3d3b36" stroke="#141412" stroke-width="0.7" stroke-linejoin="round" />
<path d="M967.0 780.6 L980.5 770.2 L976.9 763.8 L967.8 770.9Z" fill="#5f5c55" stroke="#141412" stroke-width="1.0" stroke-linejoin="round" />
<path d="M876.6 722.8 L967.0 780.6 L967.8 770.9 L881.5 716.0Z" fill="#9d9a91" stroke="#141412" stroke-width="1.0" stroke-linejoin="round" />
<path d="M881.5 716.0 L967.8 770.9 L976.9 763.8 L890.6 709.4Z" fill="#88857c" stroke="#141412" stroke-width="1.0" stroke-linejoin="round" />
<path d="M968.3 782.9 L982.2 791.8 L995.7 781.3 L995.7 779.8 L982.2 790.3 L968.3 781.5Z" fill="#3d3b36" stroke="#141412" stroke-width="0.7" stroke-linejoin="round" />
<path d="M982.2 790.3 L995.7 779.8 L992.1 773.4 L983.0 780.5Z" fill="#5f5c55" stroke="#141412" stroke-width="1.0" stroke-linejoin="round" />
<path d="M968.3 781.5 L982.2 790.3 L983.0 780.5 L973.6 774.6Z" fill="#9d9a91" stroke="#141412" stroke-width="1.0" stroke-linejoin="round" />
<path d="M973.6 774.6 L983.0 780.5 L992.1 773.4 L982.8 767.5Z" fill="#88857c" stroke="#141412" stroke-width="1.0" stroke-linejoin="round" />
<path d="M983.5 792.6 L997.0 801.3 L1010.5 790.6 L1010.6 789.2 L997.0 799.8 L983.5 791.2Z" fill="#3d3b36" stroke="#141412" stroke-width="0.7" stroke-linejoin="round" />
<path d="M997.0 799.8 L1010.6 789.2 L1007.0 782.8 L997.8 789.9Z" fill="#5f5c55" stroke="#141412" stroke-width="1.0" stroke-linejoin="round" />
<path d="M983.5 791.2 L997.0 799.8 L997.8 789.9 L988.9 784.3Z" fill="#9d9a91" stroke="#141412" stroke-width="1.0" stroke-linejoin="round" />
<path d="M988.9 784.3 L997.8 789.9 L1007.0 782.8 L998.0 777.1Z" fill="#88857c" stroke="#141412" stroke-width="1.0" stroke-linejoin="round" />
</g>
<g id="m_inner">
<defs><linearGradient id="gub" gradientUnits="userSpaceOnUse" x1="1250" y1="470" x2="1470" y2="580"><stop offset="0" stop-color="#55524b"/><stop offset="0.45" stop-color="#3d3b36"/><stop offset="1" stop-color="#5a5750"/></linearGradient></defs>
<path d="M1260.0 457.5 L1290.0 432.0 L1308.0 423.0 L1310.0 415.0 L1308.8 405.5 L1337.5 388.8 L1333.8 431.8 L1277.5 464.2Z" fill="#4d4a44" stroke="#1d1c1a" stroke-width="0.8" stroke-linejoin="round" />
<path d="M1243.0 460.0 L1285.0 429.2 L1290.0 432.0 L1260.0 457.5Z" fill="#66625a" stroke="#1d1c1a" stroke-width="0.8" stroke-linejoin="round" />
<path d="M1285.0 429.2 L1300.0 420.5 L1308.0 423.0 L1290.0 432.0Z" fill="#77736a" stroke="#1d1c1a" stroke-width="0.8" stroke-linejoin="round" />
<path d="M1299.5 410.0 L1309.0 412.0 L1310.5 415.5 L1302.0 414.0Z" fill="#4d4a44" stroke="#1d1c1a" stroke-width="0.3" stroke-linejoin="round" />
<path d="M1300.0 401.8 L1330.0 385.5 L1337.5 388.8 L1308.8 405.5Z" fill="#6f6b63" stroke="#1d1c1a" stroke-width="0.8" stroke-linejoin="round" />
<path d="M1300.0 401.8 L1308.8 405.5 L1308.8 412.5 L1300.0 411.2Z" fill="#8e8a80" stroke="#1d1c1a" stroke-width="0.8" stroke-linejoin="round" />
<path d="M1302.5 413.0 L1310.0 415.0 L1310.0 420.5 L1302.5 419.2Z" fill="#7d796f" stroke="#1d1c1a" stroke-width="0.8" stroke-linejoin="round" />
<path d="M1243.0 460.0 L1260.0 457.5 L1277.5 464.2 L1473.8 556.2 L1472.5 568.8Z" fill="#6a665e" stroke="#1d1c1a" stroke-width="0.8" stroke-linejoin="round" />
<path d="M1243.0 460.0 L1472.5 568.8 L1472.5 585.0 L1243.8 475.0Z" fill="url(#gub)" stroke="#1d1c1a" stroke-width="0.8" stroke-linejoin="round" />
<path d="M1472.5 568.8 L1510.0 540.5 L1533.8 523.8 L1533.8 515.0 L1532.5 513.8 L1532.5 504.5 L1560.0 486.2 L1553.8 530.0 L1472.5 585.0Z" fill="#625e57" stroke="#1d1c1a" stroke-width="0.8" stroke-linejoin="round" />
<path d="M1473.8 556.2 L1507.5 532.0 L1522.5 523.8 L1533.8 523.8 L1510.0 540.5 L1472.5 568.8Z" fill="#716d65" stroke="#1d1c1a" stroke-width="0.8" stroke-linejoin="round" />
<path d="M1507.5 532.0 L1518.8 537.0" fill="none" stroke="#24231f" stroke-width="0.6" stroke-linecap="round" />
<path d="M1522.5 500.0 L1551.2 482.0 L1560.0 486.2 L1532.5 504.5Z" fill="#6f6b63" stroke="#1d1c1a" stroke-width="0.8" stroke-linejoin="round" />
<path d="M1522.5 500.0 L1532.5 504.5 L1532.5 513.8 L1522.5 510.5Z" fill="#8e8a80" stroke="#1d1c1a" stroke-width="0.8" stroke-linejoin="round" />
<path d="M1525.0 511.5 L1533.8 515.0 L1533.8 523.8 L1522.5 523.8 L1525.0 520.0Z" fill="#7d796f" stroke="#1d1c1a" stroke-width="0.8" stroke-linejoin="round" />
<path d="M1428.8 349.5 L1435.0 346.2 L1435.0 354.5 L1428.8 356.2Z" fill="#77736a" stroke="#1d1c1a" stroke-width="0.8" stroke-linejoin="round" />
<path d="M1446.2 340.5 L1453.8 336.2 L1458.8 338.0 L1451.2 342.5Z" fill="#5a5750" stroke="#1d1c1a" stroke-width="0.8" stroke-linejoin="round" />
<path d="M1438.8 353.0 L1470.0 337.0 L1468.8 348.8 L1438.8 363.8Z" fill="#5a5750" stroke="#1d1c1a" stroke-width="0.8" stroke-linejoin="round" />
<path d="M1432.5 350.0 L1463.8 333.8 L1470.0 337.0 L1438.8 353.0Z" fill="#6f6b63" stroke="#1d1c1a" stroke-width="0.8" stroke-linejoin="round" />
<path d="M1432.5 350.0 L1438.8 353.0 L1438.8 363.8 L1432.5 362.0Z" fill="#8e8a80" stroke="#1d1c1a" stroke-width="0.8" stroke-linejoin="round" />
<defs><linearGradient id="gbc" gradientUnits="userSpaceOnUse" x1="1600" y1="390" x2="1690" y2="425"><stop offset="0" stop-color="#77746c"/><stop offset="0.5" stop-color="#86837b"/><stop offset="1" stop-color="#706d65"/></linearGradient></defs>
<path d="M1605.0 383.8 L1684.4 414.4 L1681.9 430.0 L1602.5 399.4Z" fill="url(#gbc)" stroke="#1d1c1a" stroke-width="0.8" stroke-linejoin="round" />
<path d="M1605.0 383.8 L1608.1 381.9 L1687.5 413.1 L1684.4 414.4Z" fill="#5f5b54" stroke="#1d1c1a" stroke-width="0.8" stroke-linejoin="round" />
<path d="M1684.4 414.4 L1687.5 413.1 L1685.0 428.8 L1681.9 430.0Z" fill="#4f4c46" stroke="#1d1c1a" stroke-width="0.8" stroke-linejoin="round" />
<path d="M1663.1 457.5 L1665.0 456.2 L1713.1 428.8 L1710.0 442.5 L1663.1 473.8Z" fill="#5d5952" stroke="#1d1c1a" stroke-width="0.8" stroke-linejoin="round" />
<path d="M1652.5 453.1 L1700.6 420.0 L1711.2 424.4 L1712.5 426.9 L1713.1 428.8 L1665.0 456.9 L1663.1 457.5Z" fill="#77736a" stroke="#1d1c1a" stroke-width="0.8" stroke-linejoin="round" />
<path d="M1663.5 457.2 L1711.5 425.9" fill="none" stroke="#2a2925" stroke-width="1.0" stroke-linecap="round" />
<path d="M1652.5 453.1 L1663.1 457.5 L1661.2 473.1 L1649.4 468.8Z" fill="#807d75" stroke="#1d1c1a" stroke-width="0.8" stroke-linejoin="round" />
<path d="M1663.1 457.5 L1665.0 456.9 L1665.0 473.1 L1661.2 473.1Z" fill="#908d85" stroke="#1d1c1a" stroke-width="0.5" stroke-linejoin="round" />
<path d="M1531.9 430.0 L1536.9 426.2 L1618.8 459.4 L1611.2 463.1Z" fill="#66625a" stroke="#1d1c1a" stroke-width="0.8" stroke-linejoin="round" />
<defs><linearGradient id="gbc2" gradientUnits="userSpaceOnUse" x1="1530" y1="435" x2="1610" y2="470"><stop offset="0" stop-color="#706d65"/><stop offset="0.6" stop-color="#85827a"/><stop offset="1" stop-color="#77746c"/></linearGradient></defs>
<path d="M1531.9 430.0 L1611.2 463.1 L1596.2 473.1 L1529.4 445.0Z" fill="url(#gbc2)" stroke="#1d1c1a" stroke-width="0.8" stroke-linejoin="round" />
<path d="M1596.2 473.1 L1611.2 463.1 L1618.8 459.4 L1623.1 468.8 L1578.8 498.8 L1567.5 493.8Z" fill="#77736a" stroke="#1d1c1a" stroke-width="0.8" stroke-linejoin="round" />
<path d="M1623.1 468.8 L1621.9 485.0 L1577.0 513.8 L1578.8 498.8Z" fill="#5d5952" stroke="#1d1c1a" stroke-width="0.8" stroke-linejoin="round" />
<path d="M1567.5 493.8 L1578.8 498.8 L1577.0 513.8 L1564.5 508.8Z" fill="#807d75" stroke="#1d1c1a" stroke-width="0.8" stroke-linejoin="round" />
<path d="M1618.8 459.4 L1633.1 465.0 L1625.0 470.0 L1623.1 468.8Z" fill="#6f6b63" stroke="#1d1c1a" stroke-width="0.8" stroke-linejoin="round" />
<path d="M1625.0 470.0 L1633.1 465.0 L1630.6 481.2 L1624.4 484.4Z" fill="#5a5750" stroke="#1d1c1a" stroke-width="0.8" stroke-linejoin="round" />
<path d="M1623.1 468.8 L1625.0 470.0 L1624.4 484.4 L1621.9 485.0Z" fill="#8e8a80" stroke="#1d1c1a" stroke-width="0.8" stroke-linejoin="round" />
</g>
<g id="m_leds">
<ellipse cx="608.5" cy="836.0" rx="3.4" ry="4.6" transform="rotate(-35 608.5 836.0)" fill="#5a5750" stroke="#1c1b19" stroke-width="1.2"/>
<path d="M606.0 834.5 l4 2" stroke="#1c1b19" stroke-width="0.7"/>
<ellipse cx="920.0" cy="919.0" rx="3.4" ry="4.6" transform="rotate(-35 920.0 919.0)" fill="#5a5750" stroke="#1c1b19" stroke-width="1.2"/>
<path d="M917.5 917.5 l4 2" stroke="#1c1b19" stroke-width="0.7"/>
<ellipse cx="753.5" cy="946.5" rx="3.4" ry="4.6" transform="rotate(-35 753.5 946.5)" fill="#5a5750" stroke="#1c1b19" stroke-width="1.2"/>
<path d="M751.0 945.0 l4 2" stroke="#1c1b19" stroke-width="0.7"/>
</g>
</g>
<defs><filter id="vcb" x="-30%" y="-30%" width="160%" height="160%"><feGaussianBlur stdDeviation="3.5"/></filter></defs>
<path d="M1826 236L1858 258L1896 238L1892 226L1858 232Z" fill="#000" fill-opacity="0.16" filter="url(#vcb)"/>
<path d="M1822.2 190.1 L1855.7 176.5 L1891.5 191.2 L1856.2 208.9Z" fill="#ebebeb" fill-opacity="0.7"/>
<path d="M1822.2 190.1 L1856.2 208.9 L1856.2 250.9 L1824.4 229.9Z" fill="#e4e4e4" fill-opacity="0.72"/>
<path d="M1856.2 208.9 L1891.5 191.2 L1888.0 227.0 L1856.2 250.9Z" fill="#dadada" fill-opacity="0.72"/>
<path d="M1822.2 190.1 L1855.7 176.5 L1891.5 191.2 L1856.2 208.9Z M1822.2 190.1 L1856.2 208.9 L1856.2 250.9 L1824.4 229.9Z M1856.2 208.9 L1891.5 191.2 L1888.0 227.0 L1856.2 250.9Z" fill="none" stroke="#8a8a8a" stroke-width="0.7" stroke-dasharray="5 2.5" stroke-linejoin="round"/>
<g transform="matrix(35.800,14.750,-33.500,13.600,1855.70,176.50)"><text x="0.5" y="0.74" font-size="0.62" text-anchor="middle" fill="#9a9a9a" font-family="Liberation Sans,Noto Sans CJK JP,sans-serif">上</text></g>
<g transform="matrix(34.050,18.800,2.200,39.800,1822.20,190.10)"><text x="0.5" y="0.74" font-size="0.62" text-anchor="middle" fill="#989ba0" font-family="Liberation Sans,Noto Sans CJK JP,sans-serif">前</text></g>
<g transform="matrix(35.250,-17.650,-0.300,42.000,1856.25,208.90)"><text x="0.5" y="0.74" font-size="0.62" text-anchor="middle" fill="#989ba0" font-family="Liberation Sans,Noto Sans CJK JP,sans-serif">右</text></g>
<path d="M1824.4 229.9L1820.5 183.9" stroke="#6d74ff" stroke-width="1.4"/>
<path d="M1824.4 229.9L1862 257.7" stroke="#ee8b8b" stroke-width="1.6"/>
<text x="1819.3" y="181.5" font-size="13" fill="#7f86ff" text-anchor="middle" font-family="Liberation Sans,sans-serif">Z</text>
<text x="1867" y="266" font-size="12.5" fill="#ff8f8f" text-anchor="middle" font-family="Liberation Sans,sans-serif">X</text>
</svg>

<div class="abs" id="topblack"></div>
<div class="abs" id="titlebar"></div>
<div class="abs" id="tabbar"></div>
<div class="abs" id="doctab"></div>
<div class="abs" id="toolbar"></div>
<div class="abs" id="tbline"></div>
<div class="abs" id="botblack"></div>
<div class="abs" id="rstrip"></div>

<svg width="1928" height="1056" viewBox="0 0 1928 1056" style="position:absolute;left:0;top:0">
<path d="M4.5 11.5H14.5L17 14V24.5L14.5 27H4.5Q3.2 27 3.2 25.5V13Q3.2 11.5 4.5 11.5Z" fill="#f47b20"/><path d="M3.2 22.5H17V25Q17 27 15 27H4.5Q3.2 27 3.2 25.5Z" fill="#a0431a"/>
<path d="M8 13.6H12.6V15.2H9.8V17H12.2V18.5H9.8V21.3H8Z" fill="#fff"/>
<path d="M1799 18.5H1809" stroke="#000" stroke-width="1.1"/>
<path d="M1844.5 15.5H1852V22.5H1844.5Z M1846.5 15.5V13.5H1854V20.5H1852" fill="none" stroke="#000" stroke-width="1.1"/>
<path d="M1890 13.5L1900 23M1900 13.5L1890 23" stroke="#000" stroke-width="1.1"/>
<rect x="9.3" y="40.1" width="3.8" height="3.8" fill="#666"/>
<rect x="14.2" y="40.1" width="3.8" height="3.8" fill="#666"/>
<rect x="19.1" y="40.1" width="3.8" height="3.8" fill="#666"/>
<rect x="9.3" y="45.0" width="3.8" height="3.8" fill="#666"/>
<rect x="14.2" y="45.0" width="3.8" height="3.8" fill="#666"/>
<rect x="19.1" y="45.0" width="3.8" height="3.8" fill="#666"/>
<rect x="9.3" y="49.9" width="3.8" height="3.8" fill="#666"/>
<rect x="14.2" y="49.9" width="3.8" height="3.8" fill="#666"/>
<rect x="19.1" y="49.9" width="3.8" height="3.8" fill="#666"/>
<path d="M42 39.5H50L55 44.5V55H42Z" fill="#666"/><path d="M50.3 39L55.4 44.2H50.3Z" fill="#ccc"/>
<path d="M61.6 44.2 h6.4 l-3.2 4.2 Z" fill="#666"/>
<path d="M87.5 40H98L101 43V54H87.5Z" fill="#666"/><rect x="90" y="40.8" width="7.5" height="4.2" fill="#ccc"/><rect x="94.6" y="41.2" width="1.8" height="3.2" fill="#666"/><rect x="90" y="48" width="8.5" height="6" fill="#ccc"/><rect x="91.2" y="49.3" width="6" height="1.2" fill="#666"/>
<path d="M121 45.5H127.5Q132.5 45.5 132.5 52.5" fill="none" stroke="#666" stroke-width="1.8"/><path d="M120 45.5L126 41.5V49.5Z" fill="#666"/>
<path d="M140.3 44.2 h6.4 l-3.2 4.2 Z" fill="#666"/>
<path d="M172 45.5H165.5Q160.5 45.5 160.5 52.5" fill="none" stroke="#9a9a9a" stroke-width="1.8"/><path d="M173 45.5L167 41.5V49.5Z" fill="#9a9a9a"/>
<path d="M179.3 44.2 h6.4 l-3.2 4.2 Z" fill="#9a9a9a"/>
<path d="M886 43.5L891 41.5H901.5V51.5L896.5 55.5L886 52.5Z" fill="#6e6e6e"/><path d="M886 43.5L896.5 45.5L901.5 41.5" fill="none" stroke="#ddd" stroke-width="0.7"/><path d="M896.5 45.5V55.5" stroke="#ddd" stroke-width="0.7"/><path d="M886.3 44L896.2 45.9V55L886.3 52.2Z" fill="#9a9a9a"/>
<path d="M1654 45.5L1661 52.5M1661 45.5L1654 52.5" stroke="#444" stroke-width="1.2"/>
<path d="M1673 63V37Q1673 35 1675 35H1698.5Q1700.5 35 1700.5 37V63Z" fill="#b9b9b9"/>
<path d="M1681.5 48.5H1693M1687.2 42.8V54.3" stroke="#666" stroke-width="1.8"/>
<path d="M1712.8 39.2H1721V43.4H1725.7V45.2L1717.6 53.6V54.9H1712.8Z" fill="#666"/><path d="M1721.9 39.2L1725.8 42.6H1721.9Z" fill="#666"/>
<path d="M1727.1 45L1729.2 47.1L1721.6 54.6L1719.5 52.5Z" fill="#666"/><path d="M1719 53.2L1721 55.1L1718.3 55.8Z" fill="#666"/>
<circle cx="1786" cy="47" r="7.6" fill="none" stroke="#666" stroke-width="0.9"/><circle cx="1786" cy="47" r="6.2" fill="#666"/><path d="M1786 43V47.3H1789.5" fill="none" stroke="#ccc" stroke-width="1.1"/><circle cx="1790.2" cy="42.6" r="3.1" fill="#e8212c"/>
<path d="M1812 51.5Q1815 49 1815 44.5Q1815 39.5 1818.7 39.5Q1822.4 39.5 1822.4 44.5Q1822.4 49 1825.4 51.5Z" fill="#666"/><path d="M1816.6 53H1820.8L1818.7 55Z" fill="#666"/><circle cx="1823.3" cy="42.7" r="3" fill="#1a9be6"/>
<circle cx="1851.8" cy="47" r="8" fill="#666"/><text x="1851.8" y="51.6" font-size="13" font-weight="bold" fill="#ccc" text-anchor="middle" font-family="Liberation Sans,sans-serif">?</text>
<defs><linearGradient id="gav" x1="0" y1="0" x2="0" y2="1"><stop offset="0" stop-color="#b5c4d8"/><stop offset="1" stop-color="#8497b4"/></linearGradient><clipPath id="cav"><circle cx="1892.8" cy="47" r="12"/></clipPath></defs>
<circle cx="1892.8" cy="47" r="12" fill="url(#gav)"/><g clip-path="url(#cav)"><ellipse cx="1893.3" cy="43" rx="5.6" ry="6.8" fill="#56647b"/><path d="M1890.5 48H1896V52Q1903 53 1904 60H1882Q1883 53 1890.5 52Z" fill="#56647b"/></g>
<rect x="12.5" y="73.5" width="108" height="60.5" rx="4.5" fill="#f4f4f4" stroke="#dadada" stroke-width="1"/>
<path d="M84.6 101.6 h6.6 l-3.3 4.2 Z" fill="#333"/>
<rect x="138" y="84.4" width="56.5" height="3.1" fill="#0696d7"/>
<rect x="350.3" y="89.5" width="1.4" height="51" fill="#dedede"/>
<rect x="619.3" y="89.5" width="1.4" height="51" fill="#dedede"/>
<rect x="716.1" y="89.5" width="1.4" height="51" fill="#dedede"/>
<rect x="775.3" y="89.5" width="1.4" height="51" fill="#dedede"/>
<rect x="834.0" y="89.5" width="1.4" height="51" fill="#dedede"/>
<rect x="893.1" y="89.5" width="1.4" height="51" fill="#dedede"/>
<g transform="translate(130,84) scale(0.125)"><path d="M66 62H286V278H66Z" fill="none" stroke="#4d4d4d" stroke-width="8" stroke-dasharray="60 28" stroke-dashoffset="-14"/><rect x="52" y="48" width="28" height="28" fill="#555"/><rect x="272" y="48" width="28" height="28" fill="#555"/><rect x="52" y="264" width="28" height="28" fill="#555"/><path d="M124 118H232 M124 118V220" fill="none" stroke="#4d4d4d" stroke-width="8" stroke-dasharray="40 22"/><path d="M232 118Q232 200 140 218" fill="none" stroke="#4d4d4d" stroke-width="8"/><rect x="110" y="104" width="26" height="26" fill="#555"/><rect x="218" y="104" width="26" height="26" fill="#555"/><rect x="110" y="206" width="26" height="26" fill="#555"/><path d="M238 195H274V230H312V266H274V302H238V266H200V230H238Z" fill="#21a23b"/><path d="M410 265H555L600 220V255L555 300H410Z" fill="#c4c4c4"/><path d="M410 95H555V265H410Z" fill="#6aaee3"/><path d="M410 95L455 50H600L555 95Z" fill="#8fcdf7"/><path d="M555 95L600 50V220L555 265Z" fill="#4a93cf"/><path d="M627 255V75" stroke="#222" stroke-width="8"/><path d="M606 100L627 56L648 100Z" fill="#222"/><path d="M745 165Q860 60 1000 160L945 270Q870 215 790 275L745 235Z" fill="#6aaee3"/><path d="M745 165Q860 60 1000 160L955 195Q865 130 790 200Z" fill="#8fcdf7"/><path d="M745 165L790 200V275L745 235Z" fill="#4a93cf"/><path d="M955 195L1000 160V235L955 270Z" fill="#fff" stroke="#555" stroke-width="8"/><path d="M770 95Q880 30 985 105" fill="none" stroke="#333" stroke-width="8"/><path d="M748 110L790 72L800 108Z" fill="#333"/><path d="M1090 95L1135 50H1340L1300 95Z" fill="#ececec" stroke="#555" stroke-width="6"/><path d="M1300 95L1340 50V255L1300 300Z" fill="#bdbdbd" stroke="#555" stroke-width="6"/><rect x="1090" y="95" width="210" height="205" fill="#dcdcdc" stroke="#555" stroke-width="6"/><circle cx="1195" cy="195" r="64" fill="#f4f4f4" stroke="#555" stroke-width="6"/><path d="M1170 150A50 50 0 1 0 1245 205A55 55 0 0 1 1170 150Z" fill="#6aaee3"/><path d="M1460 93H1630M1460 93V260M1460 260H1630" stroke="#555" stroke-width="7" fill="none"/><rect x="1435" y="68" width="50" height="50" fill="#fff" stroke="#444" stroke-width="7"/><rect x="1603" y="68" width="52" height="52" fill="#6aaee3"/><rect x="1435" y="235" width="52" height="52" fill="#6aaee3"/><rect x="1603" y="235" width="52" height="52" fill="#6aaee3"/></g>
<g transform="translate(355,84) scale(0.125)"><path d="M75 95L120 50H160V300H75Z" fill="#dcdcdc" stroke="#555" stroke-width="6"/><path d="M130 95L175 50H245L200 95Z" fill="#8fcdf7"/><path d="M130 95H200V300H130Z" fill="#6aaee3"/><path d="M200 95L245 50V255L200 300Z" fill="#4a93cf"/><path d="M232 172H285" stroke="#222" stroke-width="8"/><path d="M270 150L308 172L270 194Z" fill="#222"/><path d="M410 110L470 50H560Q660 70 660 160V240L600 300H410Z" fill="#dcdcdc" stroke="#555" stroke-width="6"/><path d="M600 300L660 240V165L600 215Z" fill="#bdbdbd" stroke="#555" stroke-width="5"/><path d="M505 95L575 50Q660 75 662 165L612 205Q600 110 505 95Z" fill="#6aaee3"/><path d="M755 100L810 50H1005L945 100Z" fill="#ececec" stroke="#555" stroke-width="6"/><path d="M945 100L1005 50V245L945 300Z" fill="#bdbdbd" stroke="#555" stroke-width="6"/><rect x="755" y="100" width="190" height="200" fill="#dcdcdc" stroke="#555" stroke-width="6"/><rect x="785" y="135" width="130" height="140" fill="#f0f0f0"/><path d="M785 145H845V210H785Z" fill="#4a93cf"/><path d="M785 270L845 210H912V270Z" fill="#8fcdf7"/><path d="M785 145V270L845 210V145Z" fill="#4a93cf"/><path d="M1100 160L1130 130H1180V80L1215 48H1350V190L1320 222H1270L1240 300H1100Z" fill="#6aaee3"/><path d="M1180 80L1215 48H1350L1320 80Z" fill="#8fcdf7"/><path d="M1100 160L1130 130H1180V160Z" fill="#8fcdf7"/><path d="M1320 80L1350 48V190L1320 222Z" fill="#4a93cf"/><path d="M1240 222H1270L1240 300Z" fill="#4a93cf"/><path d="M1240 222L1270 222 1270 255 1240 300Z" fill="#4a93cf"/><path d="M1460 95L1500 50H1680L1635 95Z" fill="#8fcdf7"/><path d="M1460 95H1635V165H1460Z" fill="#6aaee3"/><path d="M1635 95L1680 50V125L1635 165Z" fill="#4a93cf"/><path d="M1460 205H1635V292H1460Z" fill="#dcdcdc" stroke="#555" stroke-width="5"/><path d="M1635 205L1680 165V250L1635 292Z" fill="#bdbdbd" stroke="#555" stroke-width="5"/><path d="M1440 195H1635L1695 130" fill="none" stroke="#1e8fe0" stroke-width="8"/></g>
<g transform="translate(570,84) scale(0.125)"><path d="M190 80V270M95 175H290" stroke="#333" stroke-width="14"/><path d="M190 48L232 110H148Z M190 302L232 240H148Z M65 175L128 133V217Z M318 175L255 133V217Z" fill="#333"/><path d="M497 205H595V300H497Z" fill="#dcdcdc" stroke="#777" stroke-width="5"/><path d="M600 215H690V300H600Z" fill="#dcdcdc" stroke="#777" stroke-width="5"/><path d="M600 215L630 180H718L690 215Z" fill="#ececec" stroke="#777" stroke-width="4"/><path d="M690 215L718 180V270L690 300Z" fill="#bdbdbd" stroke="#777" stroke-width="4"/><path d="M497 115L525 82H622L595 115Z" fill="#8fcdf7"/><path d="M497 115H595V205H497Z" fill="#6aaee3"/><path d="M595 115L622 82V170L595 205Z" fill="#4a93cf"/><path d="M683 53 L694 87 L727 71 L711 104 L745 115 L711 126 L727 159 L694 143 L683 177 L672 143 L639 159 L655 126 L621 115 L655 104 L639 71 L672 87 Z" fill="#f5a300"/><path d="M860 125L915 70Q960 60 958 100V150L915 165V215L860 275Z" fill="#dcdcdc" stroke="#666" stroke-width="6"/><path d="M915 75Q955 65 955 100V150L915 160Z" fill="#efefef" stroke="#666" stroke-width="5"/><path d="M1030 85L1078 130V283L1030 235H990Q978 225 982 160L1030 150Z" fill="#dcdcdc" stroke="#666" stroke-width="6"/><path d="M982 165Q1005 150 1028 165V235H990Q980 225 982 165Z" fill="#bdbdbd" stroke="#666" stroke-width="5"/><path d="M932 165V208M1005 112V160" stroke="#1e8fe0" stroke-width="7"/><path d="M1298 118L1365 50H1440L1370 118Z" fill="#f4f4f4" stroke="#555" stroke-width="6"/><path d="M1298 118H1370V293H1298Z" fill="#dcdcdc" stroke="#555" stroke-width="6"/><path d="M1370 118L1440 50V225L1370 293Z" fill="#5dc27e"/><path d="M1465 118L1535 50V225L1465 293Z" fill="#e59a68"/></g>
<g transform="translate(770,84) scale(0.125)"><rect x="175" y="192" width="226" height="48" fill="#f5a300"/><path d="M200 192V206" stroke="#8a5a00" stroke-width="5"/><path d="M223 192V212" stroke="#8a5a00" stroke-width="5"/><path d="M246 192V206" stroke="#8a5a00" stroke-width="5"/><path d="M269 192V212" stroke="#8a5a00" stroke-width="5"/><path d="M292 192V206" stroke="#8a5a00" stroke-width="5"/><path d="M315 192V212" stroke="#8a5a00" stroke-width="5"/><path d="M338 192V206" stroke="#8a5a00" stroke-width="5"/><path d="M361 192V212" stroke="#8a5a00" stroke-width="5"/><path d="M384 192V206" stroke="#8a5a00" stroke-width="5"/><path d="M178 112V182M398 112V182M195 148H382" stroke="#555" stroke-width="7" fill="none"/><path d="M185 148L215 130V166Z M392 148L362 130V166Z" fill="#555"/><rect x="640" y="57" width="232" height="230" fill="#8fcdf7"/><path d="M640 287V190Q700 130 750 175T795 235Q820 195 845 215T872 235V287Z" fill="#3f8fc8"/><circle cx="808" cy="120" r="26" fill="#ffffc8"/><rect x="643" y="60" width="226" height="224" fill="none" stroke="#4a93cf" stroke-width="6"/><rect x="1080" y="24" width="305" height="304" fill="#0696d7"/><rect x="1106" y="50" width="222" height="172" fill="none" stroke="#9be37a" stroke-width="7" stroke-dasharray="34 18"/><path d="M1272 160L1358 245L1318 250L1340 290L1312 304L1290 262L1272 285Z" fill="#fff"/></g>
<path d="M244.2 132.2 h6.2 l-3.1 4.0 Z" fill="#333"/>
<path d="M492.2 132.2 h6.2 l-3.1 4.0 Z" fill="#333"/>
<path d="M684.0 132.2 h6.2 l-3.1 4.0 Z" fill="#333"/>
<path d="M755.0 132.2 h6.2 l-3.1 4.0 Z" fill="#333"/>
<path d="M813.5 132.2 h6.2 l-3.1 4.0 Z" fill="#333"/>
<path d="M872.7 132.2 h6.2 l-3.1 4.0 Z" fill="#333"/>
<path d="M932.0 132.2 h6.2 l-3.1 4.0 Z" fill="#333"/>
</svg>
<svg style="position:absolute;left:23.0px;top:10.2px;overflow:visible" width="239.0" height="18"><text x="0" y="13.62" textLength="239.0" lengthAdjust="spacingAndGlyphs" font-size="12.5" font-weight="normal" fill="#000" style="font-family:'Liberation Sans','Noto Sans CJK JP',sans-serif;white-space:pre" xml:space="preserve">Autodesk Fusion 360 (個人用 - 商用利用不可)</text></svg>
<svg style="position:absolute;left:906.0px;top:40.0px;overflow:visible" width="56.0" height="19"><text x="0" y="14.05" textLength="56.0" lengthAdjust="spacingAndGlyphs" font-size="13" font-weight="normal" fill="#333" style="font-family:'Liberation Sans',sans-serif;white-space:pre" xml:space="preserve">HC-7 v35*</text></svg>
<svg style="position:absolute;left:1733.0px;top:39.0px;overflow:visible" width="20.0" height="17"><text x="0" y="12.35" textLength="20.0" lengthAdjust="spacingAndGlyphs" font-size="11" font-weight="normal" fill="#333" style="font-family:'Liberation Sans',sans-serif;white-space:pre" xml:space="preserve">9/10</text></svg>
<svg style="position:absolute;left:41.0px;top:93.5px;overflow:visible" width="38.0" height="18"><text x="0" y="13.20" textLength="38.0" lengthAdjust="spacingAndGlyphs" font-size="12" font-weight="bold" fill="#222" style="font-family:'Liberation Sans','IPAPGothic','IPAGothic','Noto Sans CJK JP',sans-serif;white-space:pre" xml:space="preserve">デザイン</text></svg>
<svg style="position:absolute;left:150.0px;top:65.5px;overflow:visible" width="31.0" height="17"><text x="0" y="12.35" textLength="31.0" lengthAdjust="spacingAndGlyphs" font-size="11" font-weight="bold" fill="#0696d7" style="font-family:'Liberation Sans','IPAPGothic','IPAGothic','Noto Sans CJK JP',sans-serif;white-space:pre" xml:space="preserve">ソリッド</text></svg>
<svg style="position:absolute;left:227.4px;top:65.5px;overflow:visible" width="39.8" height="17"><text x="0" y="12.35" textLength="39.8" lengthAdjust="spacingAndGlyphs" font-size="11" font-weight="normal" fill="#333" style="font-family:'Liberation Sans','IPAPGothic','IPAGothic','Noto Sans CJK JP',sans-serif;white-space:pre" xml:space="preserve">サーフェス</text></svg>
<svg style="position:absolute;left:314.7px;top:65.5px;overflow:visible" width="29.9" height="17"><text x="0" y="12.35" textLength="29.9" lengthAdjust="spacingAndGlyphs" font-size="11" font-weight="normal" fill="#333" style="font-family:'Liberation Sans','IPAPGothic','IPAGothic','Noto Sans CJK JP',sans-serif;white-space:pre" xml:space="preserve">メッシュ</text></svg>
<svg style="position:absolute;left:388.4px;top:65.5px;overflow:visible" width="31.6" height="17"><text x="0" y="12.35" textLength="31.6" lengthAdjust="spacingAndGlyphs" font-size="11" font-weight="normal" fill="#333" style="font-family:'Liberation Sans','IPAPGothic','IPAGothic','Noto Sans CJK JP',sans-serif;white-space:pre" xml:space="preserve">フォーム</text></svg>
<svg style="position:absolute;left:466.4px;top:65.5px;overflow:visible" width="53.1" height="17"><text x="0" y="12.35" textLength="53.1" lengthAdjust="spacingAndGlyphs" font-size="11" font-weight="normal" fill="#333" style="font-family:'Liberation Sans','IPAPGothic','IPAGothic','Noto Sans CJK JP',sans-serif;white-space:pre" xml:space="preserve">シート メタル</text></svg>
<svg style="position:absolute;left:564.3px;top:65.5px;overflow:visible" width="45.2" height="17"><text x="0" y="12.35" textLength="45.2" lengthAdjust="spacingAndGlyphs" font-size="11" font-weight="normal" fill="#333" style="font-family:'Liberation Sans','IPAPGothic','IPAGothic','Noto Sans CJK JP',sans-serif;white-space:pre" xml:space="preserve">プラスチック</text></svg>
<svg style="position:absolute;left:658.0px;top:65.5px;overflow:visible" width="51.5" height="17"><text x="0" y="12.35" textLength="51.5" lengthAdjust="spacingAndGlyphs" font-size="11" font-weight="normal" fill="#333" style="font-family:'Liberation Sans','IPAPGothic','IPAGothic','Noto Sans CJK JP',sans-serif;white-space:pre" xml:space="preserve">ユーティリティ</text></svg>
<svg style="position:absolute;left:219.8px;top:126.0px;overflow:visible" width="21.2" height="17"><text x="0" y="12.35" textLength="21.2" lengthAdjust="spacingAndGlyphs" font-size="11" font-weight="normal" fill="#222" style="font-family:'Liberation Sans','IPAPGothic','IPAGothic','Noto Sans CJK JP',sans-serif;white-space:pre" xml:space="preserve">作成</text></svg>
<svg style="position:absolute;left:468.0px;top:126.0px;overflow:visible" width="21.0" height="17"><text x="0" y="12.35" textLength="21.0" lengthAdjust="spacingAndGlyphs" font-size="11" font-weight="normal" fill="#222" style="font-family:'Liberation Sans','IPAPGothic','IPAGothic','Noto Sans CJK JP',sans-serif;white-space:pre" xml:space="preserve">修正</text></svg>
<svg style="position:absolute;left:642.5px;top:126.0px;overflow:visible" width="38.5" height="17"><text x="0" y="12.35" textLength="38.5" lengthAdjust="spacingAndGlyphs" font-size="11" font-weight="normal" fill="#222" style="font-family:'Liberation Sans','IPAPGothic','IPAGothic','Noto Sans CJK JP',sans-serif;white-space:pre" xml:space="preserve">アセンブリ</text></svg>
<svg style="position:absolute;left:730.5px;top:126.0px;overflow:visible" width="21.5" height="17"><text x="0" y="12.35" textLength="21.5" lengthAdjust="spacingAndGlyphs" font-size="11" font-weight="normal" fill="#222" style="font-family:'Liberation Sans','IPAPGothic','IPAGothic','Noto Sans CJK JP',sans-serif;white-space:pre" xml:space="preserve">構築</text></svg>
<svg style="position:absolute;left:789.0px;top:126.0px;overflow:visible" width="21.5" height="17"><text x="0" y="12.35" textLength="21.5" lengthAdjust="spacingAndGlyphs" font-size="11" font-weight="normal" fill="#222" style="font-family:'Liberation Sans','IPAPGothic','IPAGothic','Noto Sans CJK JP',sans-serif;white-space:pre" xml:space="preserve">検査</text></svg>
<svg style="position:absolute;left:849.0px;top:126.0px;overflow:visible" width="21.0" height="17"><text x="0" y="12.35" textLength="21.0" lengthAdjust="spacingAndGlyphs" font-size="11" font-weight="normal" fill="#222" style="font-family:'Liberation Sans','IPAPGothic','IPAGothic','Noto Sans CJK JP',sans-serif;white-space:pre" xml:space="preserve">挿入</text></svg>
<svg style="position:absolute;left:907.7px;top:126.0px;overflow:visible" width="21.3" height="17"><text x="0" y="12.35" textLength="21.3" lengthAdjust="spacingAndGlyphs" font-size="11" font-weight="normal" fill="#222" style="font-family:'Liberation Sans','IPAPGothic','IPAGothic','Noto Sans CJK JP',sans-serif;white-space:pre" xml:space="preserve">選択</text></svg>
<div style="position:absolute;left:4px;top:152px;width:298px;height:23px;background:#f2f2f2;border:1px solid #c6c6c6;"></div>
<svg style="position:absolute;left:28.8px;top:156.1px;overflow:visible" width="31.2" height="17"><text x="0" y="12.77" textLength="31.2" lengthAdjust="spacingAndGlyphs" font-size="11.5" font-weight="normal" fill="#555" style="font-family:'Liberation Sans','IPAPGothic','IPAGothic','Noto Sans CJK JP',sans-serif;white-space:pre" xml:space="preserve">ブラウザ</text></svg>
<div style="position:absolute;left:8.3px;top:183px;width:5.2px;height:812px;background:#c9c9c9;border-radius:2.6px 2.6px 0 0"></div>
<div style="position:absolute;left:8.3px;top:183px;width:5.2px;height:160px;background:#8c8c8c;border-radius:2.6px"></div>
<div class="rb" style="left:40.0px;top:182.5px;width:140.0px"></div>
<div style="position:absolute;left:65px;top:184px;width:90px;height:16px;background:#9e9e9e"></div>
<svg style="position:absolute;left:98.0px;top:182.7px;overflow:visible" width="46.0" height="18"><text x="0" y="13.20" textLength="46.0" lengthAdjust="spacingAndGlyphs" font-size="12" font-weight="bold" fill="#fff" style="font-family:'Liberation Sans','IPAPGothic','IPAGothic','Noto Sans CJK JP',sans-serif;white-space:pre" xml:space="preserve">HC-7 v35</text></svg>
<div class="rb" style="left:58.0px;top:206.5px;width:122.0px"></div>
<svg style="position:absolute;left:91.9px;top:206.7px;overflow:visible" width="76.2" height="18"><text x="0" y="13.20" textLength="76.2" lengthAdjust="spacingAndGlyphs" font-size="12" font-weight="normal" fill="#1e1e1e" style="font-family:'Liberation Sans','IPAPGothic','IPAGothic','Noto Sans CJK JP',sans-serif;white-space:pre" xml:space="preserve">ドキュメントの設定</text></svg>
<div class="rb" style="left:58.0px;top:230.5px;width:89.5px"></div>
<svg style="position:absolute;left:90.0px;top:230.7px;overflow:visible" width="45.6" height="18"><text x="0" y="13.20" textLength="45.6" lengthAdjust="spacingAndGlyphs" font-size="12" font-weight="normal" fill="#1e1e1e" style="font-family:'Liberation Sans','IPAPGothic','IPAGothic','Noto Sans CJK JP',sans-serif;white-space:pre" xml:space="preserve">ビュー管理</text></svg>
<div class="rb" style="left:58.0px;top:254.5px;width:90.8px"></div>
<svg style="position:absolute;left:115.6px;top:254.7px;overflow:visible" width="20.4" height="18"><text x="0" y="13.20" textLength="20.4" lengthAdjust="spacingAndGlyphs" font-size="12" font-weight="normal" fill="#1e1e1e" style="font-family:'Liberation Sans','IPAPGothic','IPAGothic','Noto Sans CJK JP',sans-serif;white-space:pre" xml:space="preserve">原点</text></svg>
<div class="rb" style="left:58.0px;top:278.5px;width:90.8px"></div>
<svg style="position:absolute;left:115.6px;top:278.7px;overflow:visible" width="23.8" height="18"><text x="0" y="13.20" textLength="23.8" lengthAdjust="spacingAndGlyphs" font-size="12" font-weight="normal" fill="#1e1e1e" style="font-family:'Liberation Sans','IPAPGothic','IPAGothic','Noto Sans CJK JP',sans-serif;white-space:pre" xml:space="preserve">ボディ</text></svg>
<div class="rb" style="left:76.2px;top:302.5px;width:134.5px"></div>
<svg style="position:absolute;left:133.8px;top:302.7px;overflow:visible" width="67.5" height="18"><text x="0" y="13.20" textLength="67.5" lengthAdjust="spacingAndGlyphs" font-size="12" font-weight="normal" fill="#1e1e1e" style="font-family:'Liberation Sans','IPAPGothic','IPAGothic','Noto Sans CJK JP',sans-serif;white-space:pre" xml:space="preserve">ボディ・上面・後</text></svg>
<div class="rb" style="left:76.2px;top:326.5px;width:134.5px"></div>
<svg style="position:absolute;left:133.8px;top:326.7px;overflow:visible" width="67.5" height="18"><text x="0" y="13.20" textLength="67.5" lengthAdjust="spacingAndGlyphs" font-size="12" font-weight="normal" fill="#1e1e1e" style="font-family:'Liberation Sans','IPAPGothic','IPAGothic','Noto Sans CJK JP',sans-serif;white-space:pre" xml:space="preserve">ボディ・上面・前</text></svg>
<div class="rb" style="left:76.2px;top:350.5px;width:165.2px"></div>
<svg style="position:absolute;left:133.8px;top:350.7px;overflow:visible" width="98.2" height="18"><text x="0" y="13.20" textLength="98.2" lengthAdjust="spacingAndGlyphs" font-size="12" font-weight="normal" fill="#1e1e1e" style="font-family:'Liberation Sans','IPAPGothic','IPAGothic','Noto Sans CJK JP',sans-serif;white-space:pre" xml:space="preserve">ボディ・上面・後・ライン</text></svg>
<div class="rb" style="left:76.2px;top:374.5px;width:117.2px"></div>
<svg style="position:absolute;left:133.8px;top:374.7px;overflow:visible" width="50.2" height="18"><text x="0" y="13.20" textLength="50.2" lengthAdjust="spacingAndGlyphs" font-size="12" font-weight="normal" fill="#1e1e1e" style="font-family:'Liberation Sans','IPAPGothic','IPAGothic','Noto Sans CJK JP',sans-serif;white-space:pre" xml:space="preserve">ボディ・底面</text></svg>
<div class="rb" style="left:76.2px;top:398.5px;width:111.2px"></div>
<svg style="position:absolute;left:133.8px;top:398.7px;overflow:visible" width="44.2" height="18"><text x="0" y="13.20" textLength="44.2" lengthAdjust="spacingAndGlyphs" font-size="12" font-weight="normal" fill="#1e1e1e" style="font-family:'Liberation Sans','IPAPGothic','IPAGothic','Noto Sans CJK JP',sans-serif;white-space:pre" xml:space="preserve">キーボード</text></svg>
<div class="rb" style="left:76.2px;top:422.5px;width:126.2px"></div>
<svg style="position:absolute;left:133.8px;top:422.7px;overflow:visible" width="59.2" height="18"><text x="0" y="13.20" textLength="59.2" lengthAdjust="spacingAndGlyphs" font-size="12" font-weight="normal" fill="#1e1e1e" style="font-family:'Liberation Sans','IPAPGothic','IPAGothic','Noto Sans CJK JP',sans-serif;white-space:pre" xml:space="preserve">キーボード・枠</text></svg>
<div class="rb" style="left:76.2px;top:446.5px;width:150.7px"></div>
<svg style="position:absolute;left:133.8px;top:446.7px;overflow:visible" width="83.7" height="18"><text x="0" y="13.20" textLength="83.7" lengthAdjust="spacingAndGlyphs" font-size="12" font-weight="normal" fill="#1e1e1e" style="font-family:'Liberation Sans','IPAPGothic','IPAGothic','Noto Sans CJK JP',sans-serif;white-space:pre" xml:space="preserve">ジョイスティックポート</text></svg>
<div class="rb" style="left:76.2px;top:470.5px;width:142.8px"></div>
<svg style="position:absolute;left:133.8px;top:470.7px;overflow:visible" width="72.6" height="18"><text x="0" y="13.20" textLength="72.6" lengthAdjust="spacingAndGlyphs" font-size="12" font-weight="normal" fill="#1e1e1e" style="font-family:'Liberation Sans','IPAPGothic','IPAGothic','Noto Sans CJK JP',sans-serif;white-space:pre" xml:space="preserve">カートリッジ蓋・横</text></svg>
<div class="rb" style="left:76.2px;top:494.5px;width:142.8px"></div>
<svg style="position:absolute;left:133.8px;top:494.7px;overflow:visible" width="72.6" height="18"><text x="0" y="13.20" textLength="72.6" lengthAdjust="spacingAndGlyphs" font-size="12" font-weight="normal" fill="#1e1e1e" style="font-family:'Liberation Sans','IPAPGothic','IPAGothic','Noto Sans CJK JP',sans-serif;white-space:pre" xml:space="preserve">カートリッジ蓋・後</text></svg>
<div class="rb" style="left:76.2px;top:518.5px;width:97.1px"></div>
<svg style="position:absolute;left:134.3px;top:518.7px;overflow:visible" width="29.5" height="18"><text x="0" y="13.20" textLength="29.5" lengthAdjust="spacingAndGlyphs" font-size="12" font-weight="normal" fill="#1e1e1e" style="font-family:'Liberation Sans','IPAPGothic','IPAGothic','Noto Sans CJK JP',sans-serif;white-space:pre" xml:space="preserve">LED・1</text></svg>
<div class="rb" style="left:76.2px;top:542.5px;width:98.2px"></div>
<svg style="position:absolute;left:134.3px;top:542.7px;overflow:visible" width="30.7" height="18"><text x="0" y="13.20" textLength="30.7" lengthAdjust="spacingAndGlyphs" font-size="12" font-weight="normal" fill="#1e1e1e" style="font-family:'Liberation Sans','IPAPGothic','IPAGothic','Noto Sans CJK JP',sans-serif;white-space:pre" xml:space="preserve">LED・2</text></svg>
<div class="rb" style="left:76.2px;top:566.5px;width:98.2px"></div>
<svg style="position:absolute;left:134.3px;top:566.7px;overflow:visible" width="30.7" height="18"><text x="0" y="13.20" textLength="30.7" lengthAdjust="spacingAndGlyphs" font-size="12" font-weight="normal" fill="#1e1e1e" style="font-family:'Liberation Sans','IPAPGothic','IPAGothic','Noto Sans CJK JP',sans-serif;white-space:pre" xml:space="preserve">LED・3</text></svg>
<div class="rb" style="left:76.2px;top:590.5px;width:133.4px"></div>
<svg style="position:absolute;left:133.8px;top:590.7px;overflow:visible" width="66.4" height="18"><text x="0" y="13.20" textLength="66.4" lengthAdjust="spacingAndGlyphs" font-size="12" font-weight="normal" fill="#1e1e1e" style="font-family:'Liberation Sans','IPAPGothic','IPAGothic','Noto Sans CJK JP',sans-serif;white-space:pre" xml:space="preserve">内部フレーム・1</text></svg>
<div class="rb" style="left:76.2px;top:614.5px;width:134.2px"></div>
<svg style="position:absolute;left:133.8px;top:614.7px;overflow:visible" width="67.2" height="18"><text x="0" y="13.20" textLength="67.2" lengthAdjust="spacingAndGlyphs" font-size="12" font-weight="normal" fill="#1e1e1e" style="font-family:'Liberation Sans','IPAPGothic','IPAGothic','Noto Sans CJK JP',sans-serif;white-space:pre" xml:space="preserve">内部フレーム・2</text></svg>
<div class="rb" style="left:58.0px;top:638.5px;width:139.0px"></div>
<svg style="position:absolute;left:115.6px;top:638.7px;overflow:visible" width="70.7" height="18"><text x="0" y="13.20" textLength="70.7" lengthAdjust="spacingAndGlyphs" font-size="12" font-weight="normal" fill="#1e1e1e" style="font-family:'Liberation Sans','IPAPGothic','IPAGothic','Noto Sans CJK JP',sans-serif;white-space:pre" xml:space="preserve">コンストラクション</text></svg>
<div class="rb" style="left:58.0px;top:662.5px;width:105.8px"></div>
<svg style="position:absolute;left:91.0px;top:662.7px;overflow:visible" width="62.1" height="18"><text x="0" y="13.20" textLength="62.1" lengthAdjust="spacingAndGlyphs" font-size="12" font-weight="normal" fill="#1e1e1e" style="font-family:'Liberation Sans','IPAPGothic','IPAGothic','Noto Sans CJK JP',sans-serif;white-space:pre" xml:space="preserve">押し出し2525</text></svg>
<div class="rb" style="left:58.0px;top:686.5px;width:105.8px"></div>
<svg style="position:absolute;left:91.0px;top:686.7px;overflow:visible" width="62.1" height="18"><text x="0" y="13.20" textLength="62.1" lengthAdjust="spacingAndGlyphs" font-size="12" font-weight="normal" fill="#1e1e1e" style="font-family:'Liberation Sans','IPAPGothic','IPAGothic','Noto Sans CJK JP',sans-serif;white-space:pre" xml:space="preserve">押し出し2529</text></svg>
<div class="rb" style="left:58.0px;top:710.5px;width:105.8px"></div>
<svg style="position:absolute;left:91.0px;top:710.7px;overflow:visible" width="62.1" height="18"><text x="0" y="13.20" textLength="62.1" lengthAdjust="spacingAndGlyphs" font-size="12" font-weight="normal" fill="#1e1e1e" style="font-family:'Liberation Sans','IPAPGothic','IPAGothic','Noto Sans CJK JP',sans-serif;white-space:pre" xml:space="preserve">押し出し2535</text></svg>
<div class="rb" style="left:58.0px;top:734.5px;width:89.8px"></div>
<svg style="position:absolute;left:91.0px;top:734.7px;overflow:visible" width="45.9" height="18"><text x="0" y="13.20" textLength="45.9" lengthAdjust="spacingAndGlyphs" font-size="12" font-weight="normal" fill="#1e1e1e" style="font-family:'Liberation Sans','IPAPGothic','IPAGothic','Noto Sans CJK JP',sans-serif;white-space:pre" xml:space="preserve">勾配2626</text></svg>
<div class="rb" style="left:58.0px;top:758.5px;width:105.8px"></div>
<svg style="position:absolute;left:91.0px;top:758.7px;overflow:visible" width="62.1" height="18"><text x="0" y="13.20" textLength="62.1" lengthAdjust="spacingAndGlyphs" font-size="12" font-weight="normal" fill="#1e1e1e" style="font-family:'Liberation Sans','IPAPGothic','IPAGothic','Noto Sans CJK JP',sans-serif;white-space:pre" xml:space="preserve">押し出し2635</text></svg>
<div class="rb" style="left:58.0px;top:782.5px;width:105.8px"></div>
<svg style="position:absolute;left:91.0px;top:782.7px;overflow:visible" width="62.1" height="18"><text x="0" y="13.20" textLength="62.1" lengthAdjust="spacingAndGlyphs" font-size="12" font-weight="normal" fill="#1e1e1e" style="font-family:'Liberation Sans','IPAPGothic','IPAGothic','Noto Sans CJK JP',sans-serif;white-space:pre" xml:space="preserve">押し出し2637</text></svg>
<div class="rb" style="left:58.0px;top:806.5px;width:105.8px"></div>
<svg style="position:absolute;left:91.0px;top:806.7px;overflow:visible" width="62.1" height="18"><text x="0" y="13.20" textLength="62.1" lengthAdjust="spacingAndGlyphs" font-size="12" font-weight="normal" fill="#1e1e1e" style="font-family:'Liberation Sans','IPAPGothic','IPAGothic','Noto Sans CJK JP',sans-serif;white-space:pre" xml:space="preserve">押し出し2638</text></svg>
<div class="rb" style="left:58.0px;top:830.5px;width:105.8px"></div>
<svg style="position:absolute;left:91.0px;top:830.7px;overflow:visible" width="62.1" height="18"><text x="0" y="13.20" textLength="62.1" lengthAdjust="spacingAndGlyphs" font-size="12" font-weight="normal" fill="#1e1e1e" style="font-family:'Liberation Sans','IPAPGothic','IPAGothic','Noto Sans CJK JP',sans-serif;white-space:pre" xml:space="preserve">押し出し2709</text></svg>
<div class="rb" style="left:58.0px;top:854.5px;width:102.0px"></div>
<svg style="position:absolute;left:91.0px;top:854.7px;overflow:visible" width="59.0" height="18"><text x="0" y="13.20" textLength="59.0" lengthAdjust="spacingAndGlyphs" font-size="12" font-weight="normal" fill="#1e1e1e" style="font-family:'Liberation Sans','IPAPGothic','IPAGothic','Noto Sans CJK JP',sans-serif;white-space:pre" xml:space="preserve">フィレット2714</text></svg>
<div class="rb" style="left:58.0px;top:878.5px;width:105.8px"></div>
<svg style="position:absolute;left:91.0px;top:878.7px;overflow:visible" width="62.1" height="18"><text x="0" y="13.20" textLength="62.1" lengthAdjust="spacingAndGlyphs" font-size="12" font-weight="normal" fill="#1e1e1e" style="font-family:'Liberation Sans','IPAPGothic','IPAGothic','Noto Sans CJK JP',sans-serif;white-space:pre" xml:space="preserve">押し出し2718</text></svg>
<div class="rb" style="left:58.0px;top:902.5px;width:105.8px"></div>
<svg style="position:absolute;left:91.0px;top:902.7px;overflow:visible" width="62.1" height="18"><text x="0" y="13.20" textLength="62.1" lengthAdjust="spacingAndGlyphs" font-size="12" font-weight="normal" fill="#1e1e1e" style="font-family:'Liberation Sans','IPAPGothic','IPAGothic','Noto Sans CJK JP',sans-serif;white-space:pre" xml:space="preserve">押し出し2720</text></svg>
<div class="rb" style="left:58.0px;top:926.5px;width:97.5px"></div>
<svg style="position:absolute;left:91.0px;top:926.7px;overflow:visible" width="53.0" height="18"><text x="0" y="13.20" textLength="53.0" lengthAdjust="spacingAndGlyphs" font-size="12" font-weight="normal" fill="#1e1e1e" style="font-family:'Liberation Sans','IPAPGothic','IPAGothic','Noto Sans CJK JP',sans-serif;white-space:pre" xml:space="preserve">面取り2724</text></svg>
<div class="rb" style="left:58.0px;top:950.5px;width:102.0px"></div>
<svg style="position:absolute;left:91.0px;top:950.7px;overflow:visible" width="59.0" height="18"><text x="0" y="13.20" textLength="59.0" lengthAdjust="spacingAndGlyphs" font-size="12" font-weight="normal" fill="#1e1e1e" style="font-family:'Liberation Sans','IPAPGothic','IPAGothic','Noto Sans CJK JP',sans-serif;white-space:pre" xml:space="preserve">フィレット2725</text></svg>
<div class="rb" style="left:58.0px;top:974.5px;width:102.0px"></div>
<svg style="position:absolute;left:91.0px;top:974.7px;overflow:visible" width="59.0" height="18"><text x="0" y="13.20" textLength="59.0" lengthAdjust="spacingAndGlyphs" font-size="12" font-weight="normal" fill="#1e1e1e" style="font-family:'Liberation Sans','IPAPGothic','IPAGothic','Noto Sans CJK JP',sans-serif;white-space:pre" xml:space="preserve">フィレット2726</text></svg>
<div style="position:absolute;left:4px;top:1019px;width:298px;height:22px;background:#f2f2f2;border:1px solid #c6c6c6;border-top-color:#dcdcdc"></div>
<svg style="position:absolute;left:28.0px;top:1023.0px;overflow:visible" width="31.5" height="17"><text x="0" y="12.77" textLength="31.5" lengthAdjust="spacingAndGlyphs" font-size="11.5" font-weight="normal" fill="#555" style="font-family:'Liberation Sans','IPAPGothic','IPAGothic','Noto Sans CJK JP',sans-serif;white-space:pre" xml:space="preserve">コメント</text></svg>
<svg width="1928" height="1056" viewBox="0 0 1928 1056" style="position:absolute;left:0;top:0"><defs><linearGradient id="gtri" x1="0" y1="0" x2="1" y2="1"><stop offset="0.3" stop-color="#e8e8e8"/><stop offset="1" stop-color="#555"/></linearGradient><linearGradient id="gbi" x1="0" y1="0" x2="1" y2="0"><stop offset="0" stop-color="#fff"/><stop offset="0.6" stop-color="#d2d6dc"/><stop offset="1" stop-color="#a8aeb8"/></linearGradient></defs><path d="M14.2 161.8v6.4l-4.8 -3.2Z M19.2 161.8v6.4l-4.8 -3.2Z" fill="#333"/><circle cx="287" cy="164.2" r="4.3" fill="#222"/><rect x="284.4" y="163.5" width="5.2" height="1.4" fill="#f2f2f2"/><path d="M298.8 159v10M300.8 160.5v7" stroke="#777" stroke-width="0.9"/><path d="M20.6 197.5H31.9V186.2Z" fill="url(#gtri)" stroke="#333" stroke-width="1" stroke-linejoin="round"/><path d="M42.9 192.0Q50.9 182.5 58.9 192.0Q50.9 201.5 42.9 192.0Z" fill="#9a9a9a"/><circle cx="50.9" cy="192.0" r="3.4" fill="#f2f2f2"/><circle cx="50.9" cy="192.0" r="1.9" fill="#9a9a9a"/><path d="M69 188.3l3.5 -3.4h10.5v10.5l-3.5 3.6h-10.5Z" fill="#f4f5f8" stroke="#2c3445" stroke-width="0.9" stroke-linejoin="round"/><path d="M69 188.3h10.5v10.7M79.5 188.3l3.5 -3.4" fill="none" stroke="#2c3445" stroke-width="0.8"/><path d="M69.5 188.8h9.5v9.6h-9.5Z" fill="#dfe3ea"/><circle cx="165.3" cy="192.4" r="6.1" fill="#fff" stroke="#222" stroke-width="1.1"/><circle cx="165.3" cy="192.4" r="2.5" fill="#222"/><path d="M40.6 210.2V222.2L48.8 216.2Z" fill="#e9e9ee" stroke="#333" stroke-width="1.3" stroke-linejoin="round"/><path d="M76.81 214.25 L76.81 217.75 L74.27 218.17 L74.26 218.20 L75.76 220.29 L73.29 222.76 L71.20 221.26 L71.17 221.27 L70.75 223.81 L67.25 223.81 L66.83 221.27 L66.80 221.26 L64.71 222.76 L62.24 220.29 L63.74 218.20 L63.73 218.17 L61.19 217.75 L61.19 214.25 L63.73 213.83 L63.74 213.80 L62.24 211.71 L64.71 209.24 L66.80 210.74 L66.83 210.73 L67.25 208.19 L70.75 208.19 L71.17 210.73 L71.20 210.74 L73.29 209.24 L75.76 211.71 L74.26 213.80 L74.27 213.83Z" fill="#9a9a9a"/><circle cx="69.0" cy="216.0" r="2.9" fill="#f2f2f2"/><path d="M40.6 234.2V246.2L48.8 240.2Z" fill="#e9e9ee" stroke="#333" stroke-width="1.3" stroke-linejoin="round"/><path d="M61.0 233.8h7l1.2 1.6h7.8v10.6h-16Z" fill="#9a9a9a"/><path d="M61.0 236.4h16" stroke="#f2f2f2" stroke-width="0.7"/><path d="M40.6 258.2V270.2L48.8 264.2Z" fill="#e9e9ee" stroke="#333" stroke-width="1.3" stroke-linejoin="round"/><path d="M61.5 264.0Q69.0 255.5 76.5 264.0Q69.0 272.5 61.5 264.0Z" fill="none" stroke="#a8a8a8" stroke-width="1"/><circle cx="69.0" cy="264.0" r="2.8" fill="none" stroke="#a8a8a8" stroke-width="1"/><path d="M63.5 257.5L74.5 270.5" stroke="#a8a8a8" stroke-width="1"/><path d="M86.0 257.8h7l1.2 1.6h7.8v10.6h-16Z" fill="#9a9a9a"/><path d="M86.0 260.4h16" stroke="#f2f2f2" stroke-width="0.7"/><path d="M38.8 293.5H50.1V282.2Z" fill="url(#gtri)" stroke="#333" stroke-width="1" stroke-linejoin="round"/><path d="M61.0 288.0Q69.0 278.5 77.0 288.0Q69.0 297.5 61.0 288.0Z" fill="#9a9a9a"/><circle cx="69.0" cy="288.0" r="3.4" fill="#f2f2f2"/><circle cx="69.0" cy="288.0" r="1.9" fill="#9a9a9a"/><path d="M86.0 281.8h7l1.2 1.6h7.8v10.6h-16Z" fill="#9a9a9a"/><path d="M86.0 284.4h16" stroke="#f2f2f2" stroke-width="0.7"/><path d="M78.9 312.0Q86.9 302.5 94.9 312.0Q86.9 321.5 78.9 312.0Z" fill="#9a9a9a"/><circle cx="86.9" cy="312.0" r="3.4" fill="#f2f2f2"/><circle cx="86.9" cy="312.0" r="1.9" fill="#9a9a9a"/><rect x="104.2" y="304.5" width="15.5" height="15" rx="4" ry="3.2" fill="#fff" stroke="#3b4353" stroke-width="1"/><path d="M108.4 310.1h8v8.6q-4 1.6 -8 0Z" fill="url(#gbi)"/><path d="M78.9 336.0Q86.9 326.5 94.9 336.0Q86.9 345.5 78.9 336.0Z" fill="#9a9a9a"/><circle cx="86.9" cy="336.0" r="3.4" fill="#f2f2f2"/><circle cx="86.9" cy="336.0" r="1.9" fill="#9a9a9a"/><rect x="104.2" y="328.5" width="15.5" height="15" rx="4" ry="3.2" fill="#fff" stroke="#3b4353" stroke-width="1"/><path d="M108.4 334.1h8v8.6q-4 1.6 -8 0Z" fill="url(#gbi)"/><path d="M78.9 360.0Q86.9 350.5 94.9 360.0Q86.9 369.5 78.9 360.0Z" fill="#9a9a9a"/><circle cx="86.9" cy="360.0" r="3.4" fill="#f2f2f2"/><circle cx="86.9" cy="360.0" r="1.9" fill="#9a9a9a"/><rect x="104.2" y="352.5" width="15.5" height="15" rx="4" ry="3.2" fill="#fff" stroke="#3b4353" stroke-width="1"/><path d="M108.4 358.1h8v8.6q-4 1.6 -8 0Z" fill="url(#gbi)"/><path d="M78.9 384.0Q86.9 374.5 94.9 384.0Q86.9 393.5 78.9 384.0Z" fill="#9a9a9a"/><circle cx="86.9" cy="384.0" r="3.4" fill="#f2f2f2"/><circle cx="86.9" cy="384.0" r="1.9" fill="#9a9a9a"/><rect x="104.2" y="376.5" width="15.5" height="15" rx="4" ry="3.2" fill="#fff" stroke="#3b4353" stroke-width="1"/><path d="M108.4 382.1h8v8.6q-4 1.6 -8 0Z" fill="url(#gbi)"/><path d="M78.9 408.0Q86.9 398.5 94.9 408.0Q86.9 417.5 78.9 408.0Z" fill="#9a9a9a"/><circle cx="86.9" cy="408.0" r="3.4" fill="#f2f2f2"/><circle cx="86.9" cy="408.0" r="1.9" fill="#9a9a9a"/><rect x="104.2" y="400.5" width="15.5" height="15" rx="4" ry="3.2" fill="#fff" stroke="#3b4353" stroke-width="1"/><path d="M108.4 406.1h8v8.6q-4 1.6 -8 0Z" fill="url(#gbi)"/><path d="M78.9 432.0Q86.9 422.5 94.9 432.0Q86.9 441.5 78.9 432.0Z" fill="#9a9a9a"/><circle cx="86.9" cy="432.0" r="3.4" fill="#f2f2f2"/><circle cx="86.9" cy="432.0" r="1.9" fill="#9a9a9a"/><rect x="104.2" y="424.5" width="15.5" height="15" rx="4" ry="3.2" fill="#fff" stroke="#3b4353" stroke-width="1"/><path d="M108.4 430.1h8v8.6q-4 1.6 -8 0Z" fill="url(#gbi)"/><path d="M78.9 456.0Q86.9 446.5 94.9 456.0Q86.9 465.5 78.9 456.0Z" fill="#9a9a9a"/><circle cx="86.9" cy="456.0" r="3.4" fill="#f2f2f2"/><circle cx="86.9" cy="456.0" r="1.9" fill="#9a9a9a"/><rect x="104.2" y="448.5" width="15.5" height="15" rx="4" ry="3.2" fill="#fff" stroke="#3b4353" stroke-width="1"/><path d="M108.4 454.1h8v8.6q-4 1.6 -8 0Z" fill="url(#gbi)"/><path d="M78.9 480.0Q86.9 470.5 94.9 480.0Q86.9 489.5 78.9 480.0Z" fill="#9a9a9a"/><circle cx="86.9" cy="480.0" r="3.4" fill="#f2f2f2"/><circle cx="86.9" cy="480.0" r="1.9" fill="#9a9a9a"/><rect x="104.2" y="472.5" width="15.5" height="15" rx="4" ry="3.2" fill="#fff" stroke="#3b4353" stroke-width="1"/><path d="M108.4 478.1h8v8.6q-4 1.6 -8 0Z" fill="url(#gbi)"/><path d="M78.9 504.0Q86.9 494.5 94.9 504.0Q86.9 513.5 78.9 504.0Z" fill="#9a9a9a"/><circle cx="86.9" cy="504.0" r="3.4" fill="#f2f2f2"/><circle cx="86.9" cy="504.0" r="1.9" fill="#9a9a9a"/><rect x="104.2" y="496.5" width="15.5" height="15" rx="4" ry="3.2" fill="#fff" stroke="#3b4353" stroke-width="1"/><path d="M108.4 502.1h8v8.6q-4 1.6 -8 0Z" fill="url(#gbi)"/><path d="M78.9 528.0Q86.9 518.5 94.9 528.0Q86.9 537.5 78.9 528.0Z" fill="#9a9a9a"/><circle cx="86.9" cy="528.0" r="3.4" fill="#f2f2f2"/><circle cx="86.9" cy="528.0" r="1.9" fill="#9a9a9a"/><rect x="104.2" y="520.5" width="15.5" height="15" rx="4" ry="3.2" fill="#fff" stroke="#3b4353" stroke-width="1"/><path d="M108.4 526.1h8v8.6q-4 1.6 -8 0Z" fill="url(#gbi)"/><path d="M78.9 552.0Q86.9 542.5 94.9 552.0Q86.9 561.5 78.9 552.0Z" fill="#9a9a9a"/><circle cx="86.9" cy="552.0" r="3.4" fill="#f2f2f2"/><circle cx="86.9" cy="552.0" r="1.9" fill="#9a9a9a"/><rect x="104.2" y="544.5" width="15.5" height="15" rx="4" ry="3.2" fill="#fff" stroke="#3b4353" stroke-width="1"/><path d="M108.4 550.1h8v8.6q-4 1.6 -8 0Z" fill="url(#gbi)"/><path d="M78.9 576.0Q86.9 566.5 94.9 576.0Q86.9 585.5 78.9 576.0Z" fill="#9a9a9a"/><circle cx="86.9" cy="576.0" r="3.4" fill="#f2f2f2"/><circle cx="86.9" cy="576.0" r="1.9" fill="#9a9a9a"/><rect x="104.2" y="568.5" width="15.5" height="15" rx="4" ry="3.2" fill="#fff" stroke="#3b4353" stroke-width="1"/><path d="M108.4 574.1h8v8.6q-4 1.6 -8 0Z" fill="url(#gbi)"/><path d="M78.9 600.0Q86.9 590.5 94.9 600.0Q86.9 609.5 78.9 600.0Z" fill="#9a9a9a"/><circle cx="86.9" cy="600.0" r="3.4" fill="#f2f2f2"/><circle cx="86.9" cy="600.0" r="1.9" fill="#9a9a9a"/><rect x="104.2" y="592.5" width="15.5" height="15" rx="4" ry="3.2" fill="#fff" stroke="#3b4353" stroke-width="1"/><path d="M108.4 598.1h8v8.6q-4 1.6 -8 0Z" fill="url(#gbi)"/><path d="M78.9 624.0Q86.9 614.5 94.9 624.0Q86.9 633.5 78.9 624.0Z" fill="#9a9a9a"/><circle cx="86.9" cy="624.0" r="3.4" fill="#f2f2f2"/><circle cx="86.9" cy="624.0" r="1.9" fill="#9a9a9a"/><rect x="104.2" y="616.5" width="15.5" height="15" rx="4" ry="3.2" fill="#fff" stroke="#3b4353" stroke-width="1"/><path d="M108.4 622.1h8v8.6q-4 1.6 -8 0Z" fill="url(#gbi)"/><path d="M40.6 642.2V654.2L48.8 648.2Z" fill="#e9e9ee" stroke="#333" stroke-width="1.3" stroke-linejoin="round"/><path d="M61.0 648.0Q69.0 638.5 77.0 648.0Q69.0 657.5 61.0 648.0Z" fill="#9a9a9a"/><circle cx="69.0" cy="648.0" r="3.4" fill="#f2f2f2"/><circle cx="69.0" cy="648.0" r="1.9" fill="#9a9a9a"/><path d="M86.0 641.8h7l1.2 1.6h7.8v10.6h-16Z" fill="#9a9a9a"/><path d="M86.0 644.4h16" stroke="#f2f2f2" stroke-width="0.7"/><path d="M61.0 676.3h8.5l3 -3v2.2l-3 3h-8.5Z" fill="#bdbdbd"/><path d="M61.0 666.8h8.5v10h-8.5Z" fill="#5aa3df"/><path d="M61.0 666.8l3 -2.6h8.5l-3 2.6Z" fill="#8fcdf7"/><path d="M69.5 666.8l3 -2.6v10l-3 2.6Z" fill="#3f86c6"/><path d="M75.6 676.5v-10.5" stroke="#222" stroke-width="0.9"/><path d="M75.6 664.3l1.7 3.4h-3.4Z" fill="#222"/><path d="M61.0 700.3h8.5l3 -3v2.2l-3 3h-8.5Z" fill="#bdbdbd"/><path d="M61.0 690.8h8.5v10h-8.5Z" fill="#5aa3df"/><path d="M61.0 690.8l3 -2.6h8.5l-3 2.6Z" fill="#8fcdf7"/><path d="M69.5 690.8l3 -2.6v10l-3 2.6Z" fill="#3f86c6"/><path d="M75.6 700.5v-10.5" stroke="#222" stroke-width="0.9"/><path d="M75.6 688.3l1.7 3.4h-3.4Z" fill="#222"/><path d="M61.0 724.3h8.5l3 -3v2.2l-3 3h-8.5Z" fill="#bdbdbd"/><path d="M61.0 714.8h8.5v10h-8.5Z" fill="#5aa3df"/><path d="M61.0 714.8l3 -2.6h8.5l-3 2.6Z" fill="#8fcdf7"/><path d="M69.5 714.8l3 -2.6v10l-3 2.6Z" fill="#3f86c6"/><path d="M75.6 724.5v-10.5" stroke="#222" stroke-width="0.9"/><path d="M75.6 712.3l1.7 3.4h-3.4Z" fill="#222"/><path d="M61.5 750.5v-7q0 -4 4 -5.5l3 -0.5l3 11.5l-2.5 1.5Z" fill="#dcdcdc" stroke="#555" stroke-width="0.9"/><path d="M67.5 739.1l4.5 -2.2l3.6 9l-4.2 3Z" fill="#5aa3df"/><path d="M73.0 737.3l3 7" stroke="#333" stroke-width="0.9"/><path d="M61.0 772.3h8.5l3 -3v2.2l-3 3h-8.5Z" fill="#bdbdbd"/><path d="M61.0 762.8h8.5v10h-8.5Z" fill="#5aa3df"/><path d="M61.0 762.8l3 -2.6h8.5l-3 2.6Z" fill="#8fcdf7"/><path d="M69.5 762.8l3 -2.6v10l-3 2.6Z" fill="#3f86c6"/><path d="M75.6 772.5v-10.5" stroke="#222" stroke-width="0.9"/><path d="M75.6 760.3l1.7 3.4h-3.4Z" fill="#222"/><path d="M61.0 796.3h8.5l3 -3v2.2l-3 3h-8.5Z" fill="#bdbdbd"/><path d="M61.0 786.8h8.5v10h-8.5Z" fill="#5aa3df"/><path d="M61.0 786.8l3 -2.6h8.5l-3 2.6Z" fill="#8fcdf7"/><path d="M69.5 786.8l3 -2.6v10l-3 2.6Z" fill="#3f86c6"/><path d="M75.6 796.5v-10.5" stroke="#222" stroke-width="0.9"/><path d="M75.6 784.3l1.7 3.4h-3.4Z" fill="#222"/><path d="M61.0 820.3h8.5l3 -3v2.2l-3 3h-8.5Z" fill="#bdbdbd"/><path d="M61.0 810.8h8.5v10h-8.5Z" fill="#5aa3df"/><path d="M61.0 810.8l3 -2.6h8.5l-3 2.6Z" fill="#8fcdf7"/><path d="M69.5 810.8l3 -2.6v10l-3 2.6Z" fill="#3f86c6"/><path d="M75.6 820.5v-10.5" stroke="#222" stroke-width="0.9"/><path d="M75.6 808.3l1.7 3.4h-3.4Z" fill="#222"/><path d="M61.0 844.3h8.5l3 -3v2.2l-3 3h-8.5Z" fill="#bdbdbd"/><path d="M61.0 834.8h8.5v10h-8.5Z" fill="#5aa3df"/><path d="M61.0 834.8l3 -2.6h8.5l-3 2.6Z" fill="#8fcdf7"/><path d="M69.5 834.8l3 -2.6v10l-3 2.6Z" fill="#3f86c6"/><path d="M75.6 844.5v-10.5" stroke="#222" stroke-width="0.9"/><path d="M75.6 832.3l1.7 3.4h-3.4Z" fill="#222"/><path d="M61.5 871.0v-8q0 -5.5 6 -5.5h1.5q6.5 1 6.5 8v5.5Z" fill="#dcdcdc" stroke="#555" stroke-width="0.9"/><path d="M69.0 857.5q6 1.2 6.3 7.6l-2.6 2.2q-0.3 -6.8 -7 -8.3Z" fill="#5aa3df"/><path d="M61.0 892.3h8.5l3 -3v2.2l-3 3h-8.5Z" fill="#bdbdbd"/><path d="M61.0 882.8h8.5v10h-8.5Z" fill="#5aa3df"/><path d="M61.0 882.8l3 -2.6h8.5l-3 2.6Z" fill="#8fcdf7"/><path d="M69.5 882.8l3 -2.6v10l-3 2.6Z" fill="#3f86c6"/><path d="M75.6 892.5v-10.5" stroke="#222" stroke-width="0.9"/><path d="M75.6 880.3l1.7 3.4h-3.4Z" fill="#222"/><path d="M61.0 916.3h8.5l3 -3v2.2l-3 3h-8.5Z" fill="#bdbdbd"/><path d="M61.0 906.8h8.5v10h-8.5Z" fill="#5aa3df"/><path d="M61.0 906.8l3 -2.6h8.5l-3 2.6Z" fill="#8fcdf7"/><path d="M69.5 906.8l3 -2.6v10l-3 2.6Z" fill="#3f86c6"/><path d="M75.6 916.5v-10.5" stroke="#222" stroke-width="0.9"/><path d="M75.6 904.3l1.7 3.4h-3.4Z" fill="#222"/><path d="M61.5 943.0v-8.5l5.5 -5.5h5q3.5 0 3.5 3.5v10.5Z" fill="#dcdcdc" stroke="#555" stroke-width="0.9"/><path d="M62.2 934.3l5 -5l3.6 3l-5.2 5Z" fill="#5aa3df"/><path d="M61.5 967.0v-8q0 -5.5 6 -5.5h1.5q6.5 1 6.5 8v5.5Z" fill="#dcdcdc" stroke="#555" stroke-width="0.9"/><path d="M69.0 953.5q6 1.2 6.3 7.6l-2.6 2.2q-0.3 -6.8 -7 -8.3Z" fill="#5aa3df"/><path d="M61.5 991.0v-8q0 -5.5 6 -5.5h1.5q6.5 1 6.5 8v5.5Z" fill="#dcdcdc" stroke="#555" stroke-width="0.9"/><path d="M69.0 977.5q6 1.2 6.3 7.6l-2.6 2.2q-0.3 -6.8 -7 -8.3Z" fill="#5aa3df"/><circle cx="287" cy="1031.6" r="4.3" fill="#222"/><rect x="284.4" y="1030.9" width="5.2" height="1.4" fill="#f2f2f2"/><rect x="286.3" y="1029" width="1.4" height="5.2" fill="#f2f2f2"/><path d="M298.8 1026.6v10M300.8 1028.1v7" stroke="#777" stroke-width="0.9"/></svg>
<svg width="1928" height="1056" viewBox="0 0 1928 1056" style="position:absolute;left:0;top:0"><rect x="841" y="1020" width="237" height="23.5" fill="#f0f0f0"/><g transform="translate(836,1012) scale(0.12863)"><path d="M112 212V120h-14l27 -30 27 30h-14v92Z" fill="#fff" stroke="#3c4454" stroke-width="7" stroke-linejoin="round"/><path d="M150 145q35 8 32 22q-5 22 -62 22q-40 0 -52 -6" fill="none" stroke="#3c4454" stroke-width="8"/><path d="M100 145q-38 6 -36 22" fill="none" stroke="#3c4454" stroke-width="8"/><path d="M78 182l28 -18v36Z" fill="#222"/><path d="M227 140h44l-22 28Z" fill="#333"/><path d="M322 132H442V213H322Z" fill="#f4f4f4" stroke="#3c4454" stroke-width="7"/><path d="M340 128l30 -28l12 10l30 -12v30" fill="#ddd" stroke="#3c4454" stroke-width="6" stroke-linejoin="round"/><rect x="345" y="160" width="72" height="32" fill="#aab" stroke="#3c4454" stroke-width="6"/><path d="M560 210q-20 -22 -32 -48q-6 -14 4 -16q10 0 20 22l-4 -52q0 -10 8 -10q8 0 10 10l4 34l-2 -46q0 -10 9 -10q9 0 9 10l2 44l4 -38q2 -9 9 -8q8 1 7 10l-2 42l8 -26q3 -8 10 -6q7 3 4 12l-10 44q-4 20 -14 32Z" fill="#fff" stroke="#3c4454" stroke-width="6" stroke-linejoin="round"/><circle cx="762" cy="150" r="34" fill="#dfeef2" stroke="#3c4454" stroke-width="8"/><path d="M788 176l30 28" stroke="#3c4454" stroke-width="13" stroke-linecap="round"/><path d="M815 112h34M832 96v32M815 146h34" stroke="#333" stroke-width="6"/><rect x="928" y="97" width="118" height="116" fill="none" stroke="#333" stroke-width="5" stroke-dasharray="16 10"/><circle cx="975" cy="145" r="45" fill="#dfeef2" stroke="#3c4454" stroke-width="8"/><path d="M1008 178l34 30" stroke="#3c4454" stroke-width="14" stroke-linecap="round"/><path d="M1090 140h44l-22 28Z" fill="#333"/><rect x="1184" y="97" width="118" height="90" rx="6" fill="#e8e8e8" stroke="#3c4454" stroke-width="7"/><rect x="1200" y="112" width="86" height="58" fill="#9ab6e3" stroke="#4a68a8" stroke-width="4"/><path d="M1225 190h36l6 16h14v8h-76v-8h14Z" fill="#ddd" stroke="#999" stroke-width="3"/><path d="M1325 140h44l-22 28Z" fill="#333"/><rect x="1424" y="97" width="120" height="116" fill="#fff" stroke="#3c4454" stroke-width="7"/><path d="M1448 97v116M1424 120h120" stroke="#6a7080" stroke-width="6"/><path d="M1472 97v116M1424 143h120" stroke="#6a7080" stroke-width="6"/><path d="M1496 97v116M1424 166h120" stroke="#6a7080" stroke-width="6"/><path d="M1520 97v116M1424 189h120" stroke="#6a7080" stroke-width="6"/><path d="M1565 140h44l-22 28Z" fill="#333"/><rect x="1664" y="103" width="114" height="94" rx="6" fill="#a9c0ea" stroke="#2f4f9a" stroke-width="7"/><path d="M1721 103v94M1664 150h114" stroke="#2f4f9a" stroke-width="8"/><rect x="1680" y="117" width="26" height="18" fill="#c6d6f2" stroke="#6f8fd0" stroke-width="3"/><rect x="1738" y="117" width="26" height="18" fill="#c6d6f2" stroke="#6f8fd0" stroke-width="3"/><rect x="1680" y="165" width="26" height="18" fill="#c6d6f2" stroke="#6f8fd0" stroke-width="3"/><rect x="1738" y="165" width="26" height="18" fill="#c6d6f2" stroke="#6f8fd0" stroke-width="3"/><path d="M1805 140h44l-22 28Z" fill="#333"/></g></svg><div style="position:absolute;left:48px;top:1048px;width:344px;height:8px;background:#f0f0f0;border-top:1px solid #bbb;box-sizing:border-box"></div><div style="position:absolute;left:785px;top:1048px;width:48px;height:8px;background:#333"></div><div style="position:absolute;left:1915px;top:1048px;width:1px;height:8px;background:#888"></div><div style="position:absolute;left:337px;top:1054px;width:4px;height:2px;background:#dccfee"></div><div style="position:absolute;left:364.5px;top:1053px;width:2px;height:3px;background:#f0a850"></div><div style="position:absolute;left:380px;top:1051.5px;width:5px;height:4.5px;background:#e67fe6"></div>
</body></html>
